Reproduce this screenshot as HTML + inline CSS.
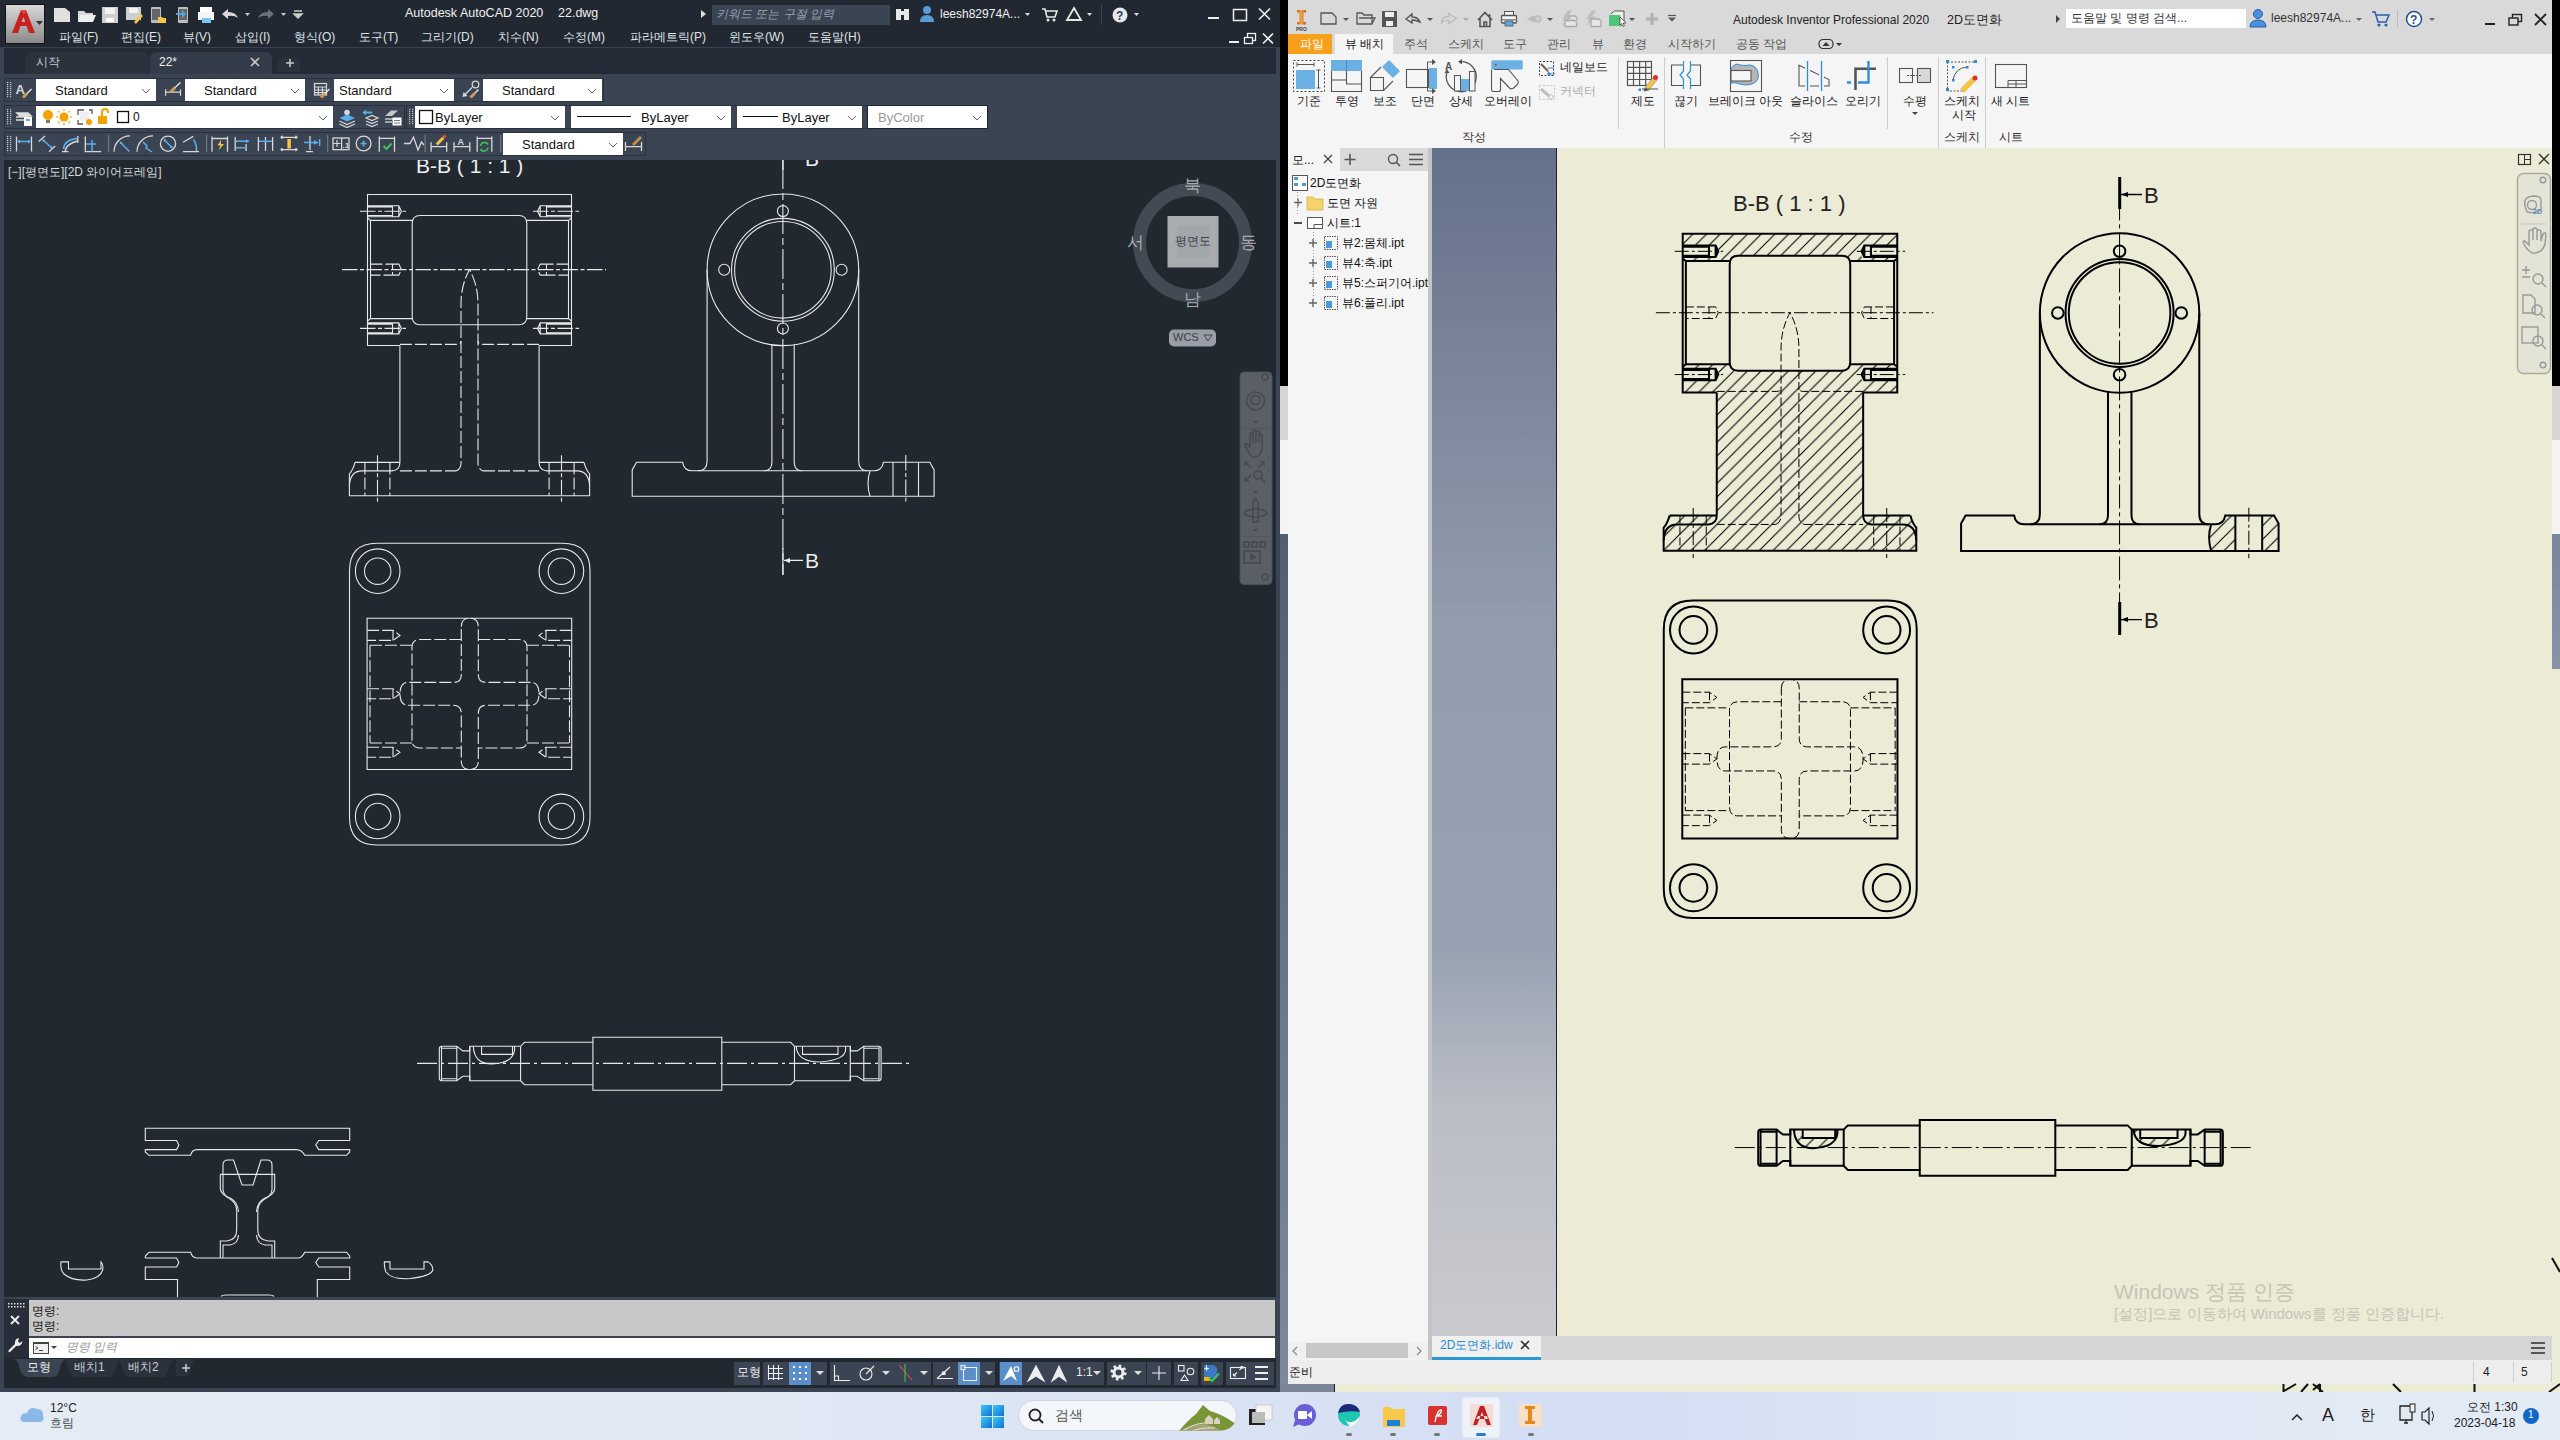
<!DOCTYPE html>
<html><head><meta charset="utf-8">
<style>
*{box-sizing:border-box;margin:0;padding:0}
html,body{width:2560px;height:1440px;overflow:hidden;background:#6f7b8f;font-family:"Liberation Sans",sans-serif}
.a{position:absolute}
#root{position:relative;width:2560px;height:1440px;overflow:hidden}
.t{position:absolute;white-space:nowrap;line-height:1}
svg.a{overflow:visible}
#acad .v,#acad .h,#acad .c,#acad .c2,#acad .c3{fill:none;stroke:#e8e8e8;stroke-width:1.1}
#acad .h{stroke-dasharray:12 3}
#acad .c{stroke-dasharray:30 4 7 4}
#acad .c2{stroke-dasharray:15.5 2.5 4 2.5}
#acad .c3{stroke-dasharray:20 4 3 4}
#inv .v,#inv .h,#inv .c,#inv .c2,#inv .c3{fill:none;stroke:#000;vector-effect:non-scaling-stroke}
#inv .v{stroke-width:2}
#inv .h{stroke-width:1;stroke-dasharray:8 3}
#inv .c{stroke-width:1;stroke-dasharray:24 4 4 4}
#inv .c2{stroke-width:1;stroke-dasharray:14 3 3 3}
#inv .c3{stroke-width:1;stroke-dasharray:20 4 3 4}
</style></head><body><div id="root">

<div class="a" style="left:0px;top:0px;width:1280px;height:1392px;background:#3b4453;"></div>
<div class="a" style="left:0px;top:0px;width:1280px;height:48px;background:#222832;"></div>
<div class="a" style="left:5px;top:4px;width:40px;height:40px;background:linear-gradient(#d8d8d8,#8a8a8a);border:1px solid #111"></div>
<svg class="a" style="left:9px;top:7px;" width="30" height="30" viewBox="0 0 30 30"><path d="M3,26 L12,3 H17 L26,26 H20 L14.5,10 L9,26 Z" fill="#c8201f"/><path d="M8,19 H19 L17.5,15 H9.5 Z" fill="#c8201f"/><path d="M12,3 H17 L15,8 Z" fill="#e84a3a"/></svg>
<svg class="a" style="left:36px;top:21px;" width="8" height="6" viewBox="0 0 8 6"><path d="M0,0 H7 L3.5,4 Z" fill="#333"/></svg>
<svg class="a" style="left:0px;top:0px;" width="320" height="48" viewBox="0 0 320 48">
    <path d="M54,8 H65 L70,12 V22 H54 Z" fill="#e0e0e0"/>
    <path d="M78,11 H84 L86,13 H93 V22 H78 Z" fill="#d8d8d8"/><path d="M80,15 H96 L93,22 H78 Z" fill="#efefef"/>
    <path d="M102,7 H118 V23 H102 Z" fill="#cfcfcf"/><rect x="105" y="8" width="10" height="6" fill="#f2f2f2"/><rect x="106" y="18" width="8" height="4" fill="#fff"/>
    <path d="M126,7 H141 V20 H126 Z" fill="#cfcfcf"/><rect x="129" y="8" width="9" height="5" fill="#f2f2f2"/><path d="M134,22 L141,14 L143,16 L136,24 Z" fill="#f2c447"/>
    <rect x="151" y="7" width="10" height="16" rx="1" fill="#bdbdbd"/><rect x="152" y="9" width="8" height="11" fill="#666"/><path d="M158,17 H162 L163,18 H166 V23 H158 Z" fill="#f2c447"/>
    <rect x="178" y="7" width="10" height="16" rx="1" fill="#bdbdbd"/><rect x="179" y="9" width="8" height="11" fill="#666"/><path d="M176,13 H182 V10 L186,14 L182,18 V15 H176 Z" fill="#4aa8e8"/>
    <rect x="200" y="7" width="12" height="6" fill="#fff"/><rect x="198" y="12" width="16" height="8" fill="#f5f5f5"/><rect x="202" y="18" width="9" height="5" fill="#7cc4f5"/>
    <path d="M222,14 L228,9 V12 Q236,12 238,18 Q234,15 228,16 V19 Z" fill="#d8d8d8"/>
    <path d="M245,13 H250 L247.5,16 Z" fill="#ccc"/>
    <path d="M274,14 L268,9 V12 Q260,12 258,18 Q262,15 268,16 V19 Z" fill="#6a7280"/>
    <path d="M281,13 H286 L283.5,16 Z" fill="#ccc"/>
    <path d="M294,11 H302 M294,14 H302 L298,18 Z" stroke="#ccc" stroke-width="1.5" fill="#ccc"/>
    </svg>
<div class="t" style="left:405px;top:7px;font-size:12.5px;color:#f0f0f0;">Autodesk AutoCAD 2020</div>
<div class="t" style="left:558px;top:7px;font-size:12.5px;color:#f0f0f0;">22.dwg</div>
<svg class="a" style="left:700px;top:9px;" width="8" height="10" viewBox="0 0 8 10"><path d="M1,1 L6,5 L1,9 Z" fill="#ddd"/></svg>
<div class="a" style="left:712px;top:5px;width:178px;height:20px;background:#3b4453;"></div>
<div class="t" style="left:716px;top:8px;font-size:12px;color:#98a0ac;font-style:italic">키워드 또는 구절 입력</div>
<svg class="a" style="left:0px;top:0px;" width="1280" height="48" viewBox="0 0 1280 48">
    <rect x="896" y="9" width="5" height="11" fill="#e8e8e8"/><rect x="904" y="9" width="5" height="11" fill="#e8e8e8"/><rect x="900" y="11" width="5" height="4" fill="#e8e8e8"/>
    <circle cx="927" cy="10" r="4" fill="#5b9bd5"/><path d="M920,22 Q920,15 927,15 Q934,15 934,22 Z" fill="#5b9bd5"/>
    <path d="M1025,13 H1030 L1027.5,16 Z" fill="#ddd"/>
    <path d="M1042,9 H1045 L1047,17 H1055 L1057,11 H1046" stroke="#e8e8e8" stroke-width="1.6" fill="none"/><circle cx="1048" cy="20" r="1.5" fill="#e8e8e8"/><circle cx="1054" cy="20" r="1.5" fill="#e8e8e8"/>
    <path d="M1074,8 L1067,20 H1081 Z" stroke="#e8e8e8" stroke-width="1.8" fill="none"/>
    <path d="M1087,13 H1092 L1089.5,16 Z" fill="#ddd"/>
    <rect x="1101" y="5" width="1" height="20" fill="#3e4653"/>
    <circle cx="1120" cy="15" r="7.5" fill="#e8e8e8"/><text x="1116" y="20" font-size="12" font-weight="bold" fill="#1f3b73" font-family="Liberation Sans">?</text>
    <path d="M1134,13 H1139 L1136.5,16 Z" fill="#ddd"/>
    <rect x="1208" y="17" width="11" height="2" fill="#eee"/>
    <rect x="1233.5" y="9.5" width="13" height="11" fill="none" stroke="#eee" stroke-width="1.5"/>
    <path d="M1259,8.5 L1270,19.5 M1270,8.5 L1259,19.5" stroke="#eee" stroke-width="1.6"/>
    <rect x="1229" y="41" width="10" height="2" fill="#eee"/>
    <rect x="1247.5" y="33.5" width="8" height="7" fill="none" stroke="#eee" stroke-width="1.3"/><rect x="1244.5" y="37.5" width="8" height="6" fill="#222832" stroke="#eee" stroke-width="1.3"/>
    <path d="M1263,33.5 L1273,43.5 M1273,33.5 L1263,43.5" stroke="#eee" stroke-width="1.6"/>
    </svg>
<div class="t" style="left:940px;top:8px;font-size:12px;color:#f0f0f0;">leesh82974A...</div>
<div class="t" style="left:59px;top:31px;font-size:12px;color:#dfe3e8;">파일(F)</div>
<div class="t" style="left:121px;top:31px;font-size:12px;color:#dfe3e8;">편집(E)</div>
<div class="t" style="left:183px;top:31px;font-size:12px;color:#dfe3e8;">뷰(V)</div>
<div class="t" style="left:235px;top:31px;font-size:12px;color:#dfe3e8;">삽입(I)</div>
<div class="t" style="left:294px;top:31px;font-size:12px;color:#dfe3e8;">형식(O)</div>
<div class="t" style="left:359px;top:31px;font-size:12px;color:#dfe3e8;">도구(T)</div>
<div class="t" style="left:421px;top:31px;font-size:12px;color:#dfe3e8;">그리기(D)</div>
<div class="t" style="left:498px;top:31px;font-size:12px;color:#dfe3e8;">치수(N)</div>
<div class="t" style="left:563px;top:31px;font-size:12px;color:#dfe3e8;">수정(M)</div>
<div class="t" style="left:630px;top:31px;font-size:12px;color:#dfe3e8;">파라메트릭(P)</div>
<div class="t" style="left:729px;top:31px;font-size:12px;color:#dfe3e8;">윈도우(W)</div>
<div class="t" style="left:808px;top:31px;font-size:12px;color:#dfe3e8;">도움말(H)</div>
<div class="a" style="left:0px;top:47px;width:1280px;height:1px;background:#39414e;"></div>
<div class="a" style="left:4px;top:48px;width:1272px;height:26px;background:#242b36;"></div>
<div class="a" style="left:25px;top:52px;width:124px;height:22px;background:#2b323e;border-radius:7px 7px 0 0"></div>
<div class="a" style="left:150px;top:52px;width:122px;height:22px;background:#343c49;border-radius:7px 7px 0 0"></div>
<div class="a" style="left:278px;top:57px;width:22px;height:15px;background:#2b323e;border-radius:6px 6px 0 0"></div>
<div class="t" style="left:36px;top:56px;font-size:12px;color:#c4cad2;">시작</div>
<div class="t" style="left:159px;top:56px;font-size:12px;color:#f0f0f0;">22*</div>
<svg class="a" style="left:250px;top:57px;" width="10" height="10" viewBox="0 0 10 10"><path d="M1,1 L9,9 M9,1 L1,9" stroke="#c8c8c8" stroke-width="1.6"/></svg>
<svg class="a" style="left:285px;top:58px;" width="10" height="10" viewBox="0 0 10 10"><path d="M5,1 V9 M1,5 H9" stroke="#c8c8c8" stroke-width="1.6"/></svg>
<div class="a" style="left:4px;top:78px;width:600px;height:24px;border:1px solid #2a313c;background:#3b4453"></div>
<svg class="a" style="left:7px;top:82px" width="6" height="16"><g fill="#c0c4ca"><rect x="0" y="0" width="1.2" height="1.2"/><rect x="0" y="2" width="1.2" height="1.2"/><rect x="0" y="4" width="1.2" height="1.2"/><rect x="0" y="6" width="1.2" height="1.2"/><rect x="0" y="8" width="1.2" height="1.2"/><rect x="0" y="10" width="1.2" height="1.2"/><rect x="0" y="12" width="1.2" height="1.2"/><rect x="0" y="14" width="1.2" height="1.2"/><rect x="3" y="0" width="1.2" height="1.2"/><rect x="3" y="2" width="1.2" height="1.2"/><rect x="3" y="4" width="1.2" height="1.2"/><rect x="3" y="6" width="1.2" height="1.2"/><rect x="3" y="8" width="1.2" height="1.2"/><rect x="3" y="10" width="1.2" height="1.2"/><rect x="3" y="12" width="1.2" height="1.2"/><rect x="3" y="14" width="1.2" height="1.2"/></g></svg>
<div class="a" style="left:36px;top:79px;width:120px;height:22px;background:#fff;"></div>
<div class="t" style="left:55px;top:84px;font-size:13px;color:#111;">Standard</div>
<svg class="a" style="left:141px;top:88px" width="10" height="6"><path d="M1,1 L5,5 L9,1" stroke="#6a6a6a" fill="none" stroke-width="1"/></svg>
<div class="a" style="left:185px;top:79px;width:120px;height:22px;background:#fff;"></div>
<div class="t" style="left:204px;top:84px;font-size:13px;color:#111;">Standard</div>
<svg class="a" style="left:290px;top:88px" width="10" height="6"><path d="M1,1 L5,5 L9,1" stroke="#6a6a6a" fill="none" stroke-width="1"/></svg>
<div class="a" style="left:334px;top:79px;width:120px;height:22px;background:#fff;"></div>
<div class="t" style="left:339px;top:84px;font-size:13px;color:#111;">Standard</div>
<svg class="a" style="left:439px;top:88px" width="10" height="6"><path d="M1,1 L5,5 L9,1" stroke="#6a6a6a" fill="none" stroke-width="1"/></svg>
<div class="a" style="left:483px;top:79px;width:119px;height:22px;background:#fff;"></div>
<div class="t" style="left:502px;top:84px;font-size:13px;color:#111;">Standard</div>
<svg class="a" style="left:587px;top:88px" width="10" height="6"><path d="M1,1 L5,5 L9,1" stroke="#6a6a6a" fill="none" stroke-width="1"/></svg>
<div class="a" style="left:4px;top:105px;width:401px;height:24px;border:1px solid #2a313c;background:#3b4453"></div>
<svg class="a" style="left:7px;top:109px" width="6" height="16"><g fill="#c0c4ca"><rect x="0" y="0" width="1.2" height="1.2"/><rect x="0" y="2" width="1.2" height="1.2"/><rect x="0" y="4" width="1.2" height="1.2"/><rect x="0" y="6" width="1.2" height="1.2"/><rect x="0" y="8" width="1.2" height="1.2"/><rect x="0" y="10" width="1.2" height="1.2"/><rect x="0" y="12" width="1.2" height="1.2"/><rect x="0" y="14" width="1.2" height="1.2"/><rect x="3" y="0" width="1.2" height="1.2"/><rect x="3" y="2" width="1.2" height="1.2"/><rect x="3" y="4" width="1.2" height="1.2"/><rect x="3" y="6" width="1.2" height="1.2"/><rect x="3" y="8" width="1.2" height="1.2"/><rect x="3" y="10" width="1.2" height="1.2"/><rect x="3" y="12" width="1.2" height="1.2"/><rect x="3" y="14" width="1.2" height="1.2"/></g></svg>
<div class="a" style="left:36px;top:106px;width:297px;height:22px;background:#fff;"></div>
<svg class="a" style="left:318px;top:115px" width="10" height="6"><path d="M1,1 L5,5 L9,1" stroke="#6a6a6a" fill="none" stroke-width="1"/></svg>
<div class="a" style="left:406px;top:105px;width:581px;height:24px;border:1px solid #2a313c;background:#3b4453"></div>
<svg class="a" style="left:409px;top:109px" width="6" height="16"><g fill="#c0c4ca"><rect x="0" y="0" width="1.2" height="1.2"/><rect x="0" y="2" width="1.2" height="1.2"/><rect x="0" y="4" width="1.2" height="1.2"/><rect x="0" y="6" width="1.2" height="1.2"/><rect x="0" y="8" width="1.2" height="1.2"/><rect x="0" y="10" width="1.2" height="1.2"/><rect x="0" y="12" width="1.2" height="1.2"/><rect x="0" y="14" width="1.2" height="1.2"/><rect x="3" y="0" width="1.2" height="1.2"/><rect x="3" y="2" width="1.2" height="1.2"/><rect x="3" y="4" width="1.2" height="1.2"/><rect x="3" y="6" width="1.2" height="1.2"/><rect x="3" y="8" width="1.2" height="1.2"/><rect x="3" y="10" width="1.2" height="1.2"/><rect x="3" y="12" width="1.2" height="1.2"/><rect x="3" y="14" width="1.2" height="1.2"/></g></svg>
<div class="a" style="left:415px;top:106px;width:150px;height:22px;background:#fff;"></div>
<div class="t" style="left:435px;top:111px;font-size:13px;color:#111;">ByLayer</div>
<svg class="a" style="left:550px;top:115px" width="10" height="6"><path d="M1,1 L5,5 L9,1" stroke="#6a6a6a" fill="none" stroke-width="1"/></svg>
<div class="a" style="left:571px;top:106px;width:160px;height:22px;background:#fff;"></div>
<div class="t" style="left:641px;top:111px;font-size:13px;color:#111;">ByLayer</div>
<svg class="a" style="left:716px;top:115px" width="10" height="6"><path d="M1,1 L5,5 L9,1" stroke="#6a6a6a" fill="none" stroke-width="1"/></svg>
<div class="a" style="left:737px;top:106px;width:125px;height:22px;background:#fff;"></div>
<div class="t" style="left:782px;top:111px;font-size:13px;color:#111;">ByLayer</div>
<svg class="a" style="left:847px;top:115px" width="10" height="6"><path d="M1,1 L5,5 L9,1" stroke="#6a6a6a" fill="none" stroke-width="1"/></svg>
<div class="a" style="left:867px;top:105px;width:121px;height:24px;background:#1f2630"></div>
<div class="a" style="left:868px;top:106px;width:119px;height:22px;background:#fff;"></div>
<div class="t" style="left:878px;top:111px;font-size:13px;color:#999;">ByColor</div>
<svg class="a" style="left:972px;top:115px" width="10" height="6"><path d="M1,1 L5,5 L9,1" stroke="#6a6a6a" fill="none" stroke-width="1"/></svg>
<div class="a" style="left:4px;top:132px;width:642px;height:24px;border:1px solid #2a313c;background:#3b4453"></div>
<svg class="a" style="left:7px;top:136px" width="6" height="16"><g fill="#c0c4ca"><rect x="0" y="0" width="1.2" height="1.2"/><rect x="0" y="2" width="1.2" height="1.2"/><rect x="0" y="4" width="1.2" height="1.2"/><rect x="0" y="6" width="1.2" height="1.2"/><rect x="0" y="8" width="1.2" height="1.2"/><rect x="0" y="10" width="1.2" height="1.2"/><rect x="0" y="12" width="1.2" height="1.2"/><rect x="0" y="14" width="1.2" height="1.2"/><rect x="3" y="0" width="1.2" height="1.2"/><rect x="3" y="2" width="1.2" height="1.2"/><rect x="3" y="4" width="1.2" height="1.2"/><rect x="3" y="6" width="1.2" height="1.2"/><rect x="3" y="8" width="1.2" height="1.2"/><rect x="3" y="10" width="1.2" height="1.2"/><rect x="3" y="12" width="1.2" height="1.2"/><rect x="3" y="14" width="1.2" height="1.2"/></g></svg>
<div class="a" style="left:503px;top:133px;width:120px;height:22px;background:#fff;"></div>
<div class="t" style="left:522px;top:138px;font-size:13px;color:#111;">Standard</div>
<svg class="a" style="left:608px;top:142px" width="10" height="6"><path d="M1,1 L5,5 L9,1" stroke="#6a6a6a" fill="none" stroke-width="1"/></svg>
<svg class="a" style="left:0px;top:0px;" width="700" height="160" viewBox="0 0 700 160">
    <text x="15.5" y="94" font-size="13" font-weight="bold" fill="#d8d8d8" font-family="Liberation Sans">A</text><path d="M23,97.5 L27,93.5" stroke="#d49a5a" stroke-width="3"/><path d="M27,93.5 L31.5,89" stroke="#e8e8e8" stroke-width="1.5"/>
    <path d="M165.6,89.3 V95.8 M180.5,89.3 V95.8 M165.6,92.2 H180.5" stroke="#d8d8d8" stroke-width="1.2" fill="none"/><path d="M170.5,92 L175,87.5" stroke="#d49a5a" stroke-width="3"/><path d="M175,87.5 L180.5,82.5" stroke="#e8e8e8" stroke-width="1.4"/>
    <g stroke="#d8d8d8" stroke-width="1.2" fill="none"><rect x="314.5" y="83.5" width="12" height="11.5"/><path d="M314.5,87 H326.5 M314.5,90 H326.5 M314.5,92.7 H326.5 M318.3,87 V95 M322.5,87 V95"/></g><path d="M321,97.5 L325,93.5" stroke="#d49a5a" stroke-width="3"/><path d="M325,93.5 L329.5,89" stroke="#e8e8e8" stroke-width="1.4"/>
    <path d="M463.5,96 L472,87.5" stroke="#d8d8d8" stroke-width="1.3"/><path d="M462.5,97 L463.5,92 L467.5,96 Z" fill="#d8d8d8"/><circle cx="475.5" cy="84.5" r="3.3" stroke="#d8d8d8" fill="none" stroke-width="1.3"/><path d="M470.5,97.5 L474.5,93.5" stroke="#d49a5a" stroke-width="3"/><path d="M474.5,93.5 L478.5,89.5" stroke="#e8e8e8" stroke-width="1.4"/>
    </svg>
<svg class="a" style="left:0px;top:0px;" width="700" height="160" viewBox="0 0 700 160">
    <path d="M17,113 H28 L31,116 H20 Z M16,117 H29 M16,120 H29" stroke="#ddd" stroke-width="1.6" fill="#ddd"/><rect x="24" y="117" width="8" height="9" fill="#fff"/><rect x="26" y="119" width="4" height="2" fill="#5aa9e6"/>
    <circle cx="48" cy="115" r="5" fill="#f5a100"/><rect x="46" y="120" width="4" height="3" fill="#777"/>
    <circle cx="64" cy="117" r="4.5" fill="#f5a100"/><g stroke="#f5a100" stroke-width="1.2"><path d="M64,109 V111 M64,123 V125 M56,117 H58 M70,117 H72 M58,111 L59.5,112.5 M70,111 L68.5,112.5 M58,123 L59.5,121.5 M70,123 L68.5,121.5"/></g>
    <path d="M78,115 V110 H84 M89,110 H92 V114 M78,120 V124 H83" stroke="#555" stroke-width="1.3" fill="none"/><rect x="80" y="112" width="9" height="9" fill="#eee"/><circle cx="89" cy="122" r="3" fill="#f5a100"/>
    <rect x="98" y="116" width="9" height="8" fill="#f5a100"/><path d="M102,116 V112 Q102,109 105,109 Q108,109 108,112 V113" stroke="#f5a100" stroke-width="2" fill="none"/>
    <rect x="117.5" y="111.5" width="11" height="11" fill="#fff" stroke="#111" stroke-width="1.3"/>
    </svg>
<div class="t" style="left:133px;top:111px;font-size:12px;color:#111;">0</div>
<svg class="a" style="left:0px;top:0px;" width="1000" height="160" viewBox="0 0 1000 160">
    <circle cx="347" cy="112.5" r="2.8" fill="#d8d8d8"/><path d="M339.5,118 L347,114.5 L355,118 L347,121.5 Z" fill="#5ab0ec"/><path d="M339.5,121 L347,124.5 L355,121 M339.5,124 L347,127.5 L355,124" stroke="#d8d8d8" stroke-width="1.3" fill="none"/>
    <path d="M362.5,112.5 L366,109.5 V111.5 H372 V113.5 H366 V115.5 Z" fill="#5ab0ec"/><path d="M366,118 L372,115.5 L378,118 L372,120.5 Z M366,121 L372,123.5 L378,121 M366,124 L372,126.5 L378,124" stroke="#d8d8d8" stroke-width="1.2" fill="none"/>
    <path d="M385,116 L391,110.5 H398 L392,116 Z" fill="#c8c8c8"/><path d="M385,119 H393 M385,122 H392" stroke="#c8c8c8" stroke-width="1.3"/><rect x="392.5" y="117.5" width="9" height="8" fill="#fff"/><path d="M394,120.5 H400 M394,123 H400" stroke="#777"/>
    <rect x="419.5" y="110.5" width="13" height="13" fill="#fff" stroke="#111" stroke-width="1.3"/>
    <path d="M577,116.5 H631" stroke="#111" stroke-width="1.2"/>
    <path d="M743,116.5 H778" stroke="#111" stroke-width="1.2"/>
    </svg>
<svg class="a" style="left:0px;top:0px;" width="700" height="160" viewBox="0 0 700 160">
    <g stroke="#d8d8d8" stroke-width="1.3" fill="none">
    <path d="M16.5,136.5 V151.5 M31.5,136.5 V151.5"/>
    <path d="M38.7,141.5 L45,136 M49,151.8 L55.2,146"/>
    <path d="M62,151.6 H68.5 M65,151.6 Q66,144 77.5,141 M77.8,136 V143"/>
    <path d="M85.3,136.4 V151.6 H101.2"/>
    <path d="M114,151.8 A16,16 0 0 1 130,135.8 M137,151.8 A16,16 0 0 1 153,135.8"/>
    <circle cx="168" cy="143.7" r="7.6"/>
    <path d="M183,142.2 L193.3,136.4 M183,151.6 H199"/>
    <path d="M212,136.4 V151.8 M227.5,136.4 V151.8 M212,138.5 H227.5"/>
    <path d="M235.2,137 V151 M246.1,144 V151"/>
    <path d="M258.4,137 V151 M265.5,137 V151 M272.6,137 V151"/>
    <path d="M281,137.3 H297 M281,149.6 H297 M282.5,135.8 L281,137.3 L282.5,138.8 M295.5,135.8 L297,137.3 L295.5,138.8 M282.5,148.1 L281,149.6 L282.5,151.1 M295.5,148.1 L297,149.6 L295.5,151.1"/>
    <path d="M310,136 V150 M306,151.6 H313"/>
    <rect x="333" y="138" width="16" height="11.7"/><path d="M341.6,138 V149.7"/>
    <circle cx="363.6" cy="143.5" r="7.4"/>
    <path d="M379.3,136.4 V151.8 M394.5,136.4 V151.8 M379.3,138.3 H394.5"/>
    <path d="M404,143.5 L410,143.5 L413.5,137 L418,150 L421.5,142 L424,145"/>
    <path d="M431.1,142.2 V151.8 M446.7,142.2 V151.8 M431.1,146.7 H446.7"/>
    <path d="M454,142.2 V151.8 M469.8,142.2 V151.8 M454,146.7 H469.8"/>
    <path d="M477.2,136.4 V151.8 M491.8,136.4 V151.8 M477.2,138.3 H491.8"/>
    <path d="M625.5,142 V151 M641.5,142 V151 M625.5,146.7 H641.5"/>
    </g>
    <text x="457.5" y="145" font-size="9" font-weight="bold" fill="#d8d8d8" font-family="Liberation Sans">A</text>
    <g stroke="#5ab0ec" stroke-width="1.5" fill="none">
    <path d="M18,141.5 H30"/><path d="M43.5,140.5 L51.5,147.5"/><path d="M63.5,149 Q64,140 77,138.5"/>
    <path d="M92.1,140 V151.6 M86,144.1 H96"/>
    <path d="M121,143 L129.5,151.5"/><path d="M143,142 L147,146 L146,148 L152,152"/><path d="M164,139.5 L172.5,148"/>
    <path d="M193.5,139.5 Q197,145 196.5,151"/>
    <path d="M236,141.3 H249 M236,147.7 H245"/><path d="M259,141.3 H272"/><path d="M304,142.4 H318 M319.6,139 V146"/>
    <path d="M363.6,140.5 V146.5 M360.6,143.5 H366.6"/>
    </g>
    <g fill="#5ab0ec"><path d="M17,141.5 L20,139.5 V143.5 Z M31,141.5 L28,139.5 V143.5 Z"/><circle cx="43.5" cy="140.5" r="1.3"/><circle cx="51.5" cy="147.5" r="1.3"/><path d="M249,141.3 L246,139.3 V143.3 Z M318,142.4 L314,140 V144.8 Z"/><circle cx="121" cy="143" r="1.3"/><circle cx="165" cy="140.5" r="1.3"/><circle cx="171.5" cy="147" r="1.3"/></g>
    <path d="M221,140 L217.5,145.5 H220.5 L218.5,150.5 L224,144 H221 Z" fill="#f2c447"/>
    <rect x="287.4" y="139" width="3.5" height="9.5" fill="#f2c447"/>
    <path d="M383.5,146 L386.5,149 L391.5,143.5" stroke="#3ec35c" stroke-width="2" fill="none"/>
    <path d="M436.7,144.5 L443.5,137.5" stroke="#f2c447" stroke-width="3"/><path d="M443,138 L445.5,135.5" stroke="#e84a3a" stroke-width="3"/>
    <path d="M480.5,146 A4,4 0 0 1 488,144.5 M488,147.5 A4,4 0 0 1 480.5,149" stroke="#3ec35c" stroke-width="1.6" fill="none"/>
    <path d="M633,145 L641,137" stroke="#c98f4e" stroke-width="2.6"/>
    <path d="M333.5,143.5 H340.5 M337,140 V147" stroke="#d8d8d8" stroke-width="1.2"/><text x="342.5" y="148" font-size="8" font-weight="bold" fill="#d8d8d8" font-family="Liberation Sans">.1</text>
    <g fill="#6c7480"><rect x="108" y="135" width="1.3" height="17"/><rect x="206" y="135" width="1.3" height="17"/><rect x="327" y="135" width="1.3" height="17"/><rect x="424.5" y="135" width="1.3" height="17"/><rect x="500" y="135" width="1.3" height="17"/></g>
    </svg>
<div class="a" style="left:4px;top:160px;width:1272px;height:1137px;background:#212830;"></div>
<div class="t" style="left:8px;top:166px;font-size:12px;color:#d4d8de;">[−][평면도][2D 와이어프레임]</div>
<svg id="acad" class="a" style="left:0;top:0;overflow:hidden" width="1276" height="1297" viewBox="0 0 1276 1297"><g>
<clipPath id="clipA"><rect x="4" y="160" width="1272" height="1137"/></clipPath><g clip-path="url(#clipA)">
<path class="v" d="M399.9,345.5 H367.5 V194.5 H571.5 V345.5 H539.1"/>
<path class="v" d="M399.9,345.5 V462.4 M539.1,345.5 V462.4"/>
<path class="v" d="M355,462.4 H399.9 M584,462.4 H539.1"/>
<path class="v" d="M355,462.4 Q353,470 349.4,474 V495.8 H589.6 V474 Q586,470 584,462.4"/>
<path class="v" d="M349.4,486 Q350,471 362,470.9 H392 Q399.9,470 399.9,462.4"/>
<path class="v" d="M589.6,486 Q589,471 577,470.9 H547 Q539.1,470 539.1,462.4"/>
<path class="v" d="M367.5,218 L370.5,220.4 H412.2 M370.5,220.4 V318.6 M367.5,321 L370.5,318.6 H412.2"/>
<path class="v" d="M571.5,218 L568.5,220.4 H526.8 M568.5,220.4 V318.6 M571.5,321 L568.5,318.6 H526.8"/>
<path class="v" d="M420.2,215.5 H518.8 Q526.8,215.5 526.8,223.5 V316.7 Q526.8,324.7 518.8,324.7 H420.2 Q412.2,324.7 412.2,316.7 V223.5 Q412.2,215.5 420.2,215.5 Z"/>
<path class="v" d="M367.5,205.7 H392.5 V216.7 H367.5 M367.5,206.89999999999998 H392.5 M367.5,215.5 H392.5 M392.5,205.7 H398.8 L401.4,211.2 L398.8,216.7 H392.5 M398.8,205.7 V216.7"/>
<path class="v" d="M571.5,205.7 H546.5 V216.7 H571.5 M571.5,206.89999999999998 H546.5 M571.5,215.5 H546.5 M546.5,205.7 H540.2 L537.6,211.2 L540.2,216.7 H546.5 M540.2,205.7 V216.7"/>
<path class="c2" d="M360,211.2 H406 M533,211.2 H579"/>
<path class="v" d="M367.5,322.9 H392.5 V333.9 H367.5 M367.5,324.09999999999997 H392.5 M367.5,332.7 H392.5 M392.5,322.9 H398.8 L401.4,328.4 L398.8,333.9 H392.5 M398.8,322.9 V333.9"/>
<path class="v" d="M571.5,322.9 H546.5 V333.9 H571.5 M571.5,324.09999999999997 H546.5 M571.5,332.7 H546.5 M546.5,322.9 H540.2 L537.6,328.4 L540.2,333.9 H546.5 M540.2,322.9 V333.9"/>
<path class="c2" d="M360,328.4 H406 M533,328.4 H579"/>
<path class="h" d="M370.5,264.1 H392.5 V275.1 H370.5 M392.5,264.1 H398.8 L401.4,269.6 L398.8,275.1 H392.5"/>
<path class="h" d="M568.5,264.1 H546.5 V275.1 H568.5 M546.5,264.1 H540.2 L537.6,269.6 L540.2,275.1 H546.5"/>
<path class="c2" d="M342,269.6 H606"/>
<path class="h" d="M456,470.9 Q461,469 461,463 V304 Q461,285 469.5,269.6 Q478,285 478,304 V463 Q478,469 483,470.9"/>
<path class="h" d="M399.9,344.4 H457 Q461,344.4 461,341 M539.1,344.4 H482 Q478,344.4 478,341"/>
<path class="h" d="M399.9,470.9 H456 M483,470.9 H539.1"/>
<path class="h" d="M364.9,462.4 V495.8"/>
<path class="h" d="M389.9,462.4 V495.8"/>
<path class="h" d="M549.1,462.4 V495.8"/>
<path class="h" d="M574.1,462.4 V495.8"/>
<path class="c2" d="M377.5,455.3 V502.9 M561.5,455.3 V502.9"/>
<circle class="v" cx="782.9" cy="269.8" r="75.8"/>
<circle class="v" cx="782.9" cy="269.8" r="51.4"/>
<circle class="v" cx="782.9" cy="269.8" r="48.3"/>
<circle class="v" cx="782.9" cy="211.10000000000002" r="5.5"/>
<circle class="v" cx="782.9" cy="328.5" r="5.5"/>
<circle class="v" cx="724.1999999999999" cy="269.8" r="5.5"/>
<circle class="v" cx="841.6" cy="269.8" r="5.5"/>
<path class="v" d="M707.1,269.8 V461 Q707.1,470.8 698,470.8 M858.7,269.8 V461 Q858.7,470.8 867.8,470.8"/>
<path class="v" d="M771.9,344.8 V462 Q771.9,470.8 764,470.8 M794.2,344.8 V462 Q794.2,470.8 802,470.8"/>
<path class="v" d="M632.2,496.2 V470 L636.5,462.3 H682.6 Q684,470.8 692,470.8 H874 Q882,470.8 883.4,462.3 H929.8 L934.1,470 V496.2 Z"/>
<path class="v" d="M893,462.3 V496.2 M918.5,462.3 V496.2 M870,470.8 Q866,483 870,496.2"/>
<path class="c2" d="M905.8,455 V503"/>
<path class="c" d="M782.9,159 V575"/>
<path class="v" d="M377.0,543.3 H562.5 Q590,543.3 590,570.8 V817.5 Q590,845 562.5,845 H377.0 Q349.5,845 349.5,817.5 V570.8 Q349.5,543.3 377.0,543.3 Z"/>
<circle class="v" cx="377.7" cy="571.2" r="22.3"/>
<circle class="v" cx="377.7" cy="571.2" r="13.2"/>
<circle class="v" cx="377.7" cy="816.4" r="22.3"/>
<circle class="v" cx="377.7" cy="816.4" r="13.2"/>
<circle class="v" cx="561.4" cy="571.2" r="22.3"/>
<circle class="v" cx="561.4" cy="571.2" r="13.2"/>
<circle class="v" cx="561.4" cy="816.4" r="22.3"/>
<circle class="v" cx="561.4" cy="816.4" r="13.2"/>
<path class="v" d="M367.1,618.2 H571.7 V769.5 H367.1 Z"/>
<path class="h" d="M461.3,639.5 H420 Q412,639.5 412,647.5 V740 Q412,748 420,748 H461.3 M478.3,639.5 H519 Q527,639.5 527,647.5 V740 Q527,748 519,748 H478.3"/>
<path class="h" d="M461.3,626.7 Q461.3,618.2 469.8,618.2 Q478.3,618.2 478.3,626.7 V674.4 Q478.3,682.4 486.3,682.4 H531 Q539,682.4 539,693.8 Q539,705.3 531,705.3 H486.3 Q478.3,705.3 478.3,713.3 V761 Q478.3,769.5 469.8,769.5 Q461.3,769.5 461.3,761 V713.3 Q461.3,705.3 453.3,705.3 H408 Q400,705.3 400,693.8 Q400,682.4 408,682.4 H453.3 Q461.3,682.4 461.3,674.4 Z"/>
<path class="h" d="M370,645.3 H412 M370,743 H412 M370,645.3 V743 M527,645.3 H569.5 M527,743 H569.5 M569.5,645.3 V743"/>
<path class="h" d="M367.1,630.4 H393 L400,635.4 L393,640.4 H367.1 M393,630.4 V640.4"/>
<path class="h" d="M571.7,630.4 H546 L539,635.4 L546,640.4 H571.7 M546,630.4 V640.4"/>
<path class="h" d="M367.1,688.8 H393 L400,693.8 L393,698.8 H367.1 M393,688.8 V698.8"/>
<path class="h" d="M571.7,688.8 H546 L539,693.8 L546,698.8 H571.7 M546,688.8 V698.8"/>
<path class="h" d="M367.1,747.3 H393 L400,752.3 L393,757.3 H367.1 M393,747.3 V757.3"/>
<path class="h" d="M571.7,747.3 H546 L539,752.3 L546,757.3 H571.7 M546,747.3 V757.3"/>
<path class="v" d="M439.3,1049 Q439.3,1046.3 442,1046.3 H456.8 L462.8,1050.9 H469.8 V1046.3 H520.6 L524.5,1042.3 H592.9 V1037.3 H721.8 V1042.3 H790.6 L794.5,1046.3 H850.3 V1050.9 H857.2 L863.8,1046.3 H878.4 Q881.1,1046.3 881.1,1049 V1078 Q881.1,1080.8 878.4,1080.8 H863.8 L857.2,1076.2 H850.3 V1080.8 H794.5 L790.6,1084.7 H721.8 V1090.3 H592.9 V1084.7 H524.5 L520.6,1080.8 H469.8 V1076.2 H462.8 L456.8,1080.8 H442 Q439.3,1080.8 439.3,1078 Z"/>
<path class="v" d="M456.8,1046.3 V1080.8 M469.8,1046.3 V1080.8 M520.6,1046.3 V1080.8 M592.9,1042.3 V1084.7 M721.8,1042.3 V1084.7 M794.5,1046.3 V1080.8 M850.3,1046.3 V1080.8 M863.8,1046.3 V1080.8"/>
<path class="v" d="M441.5,1046.3 V1080.8 M879,1046.3 V1080.8 M442,1048.3 H456.8 M442,1078.8 H456.8 M863.8,1048.3 H878.4 M863.8,1078.8 H878.4"/>
<path class="v" d="M473.3,1046.3 Q474,1064 492,1064 Q513,1063 514.6,1050 V1046.3 M481.6,1046.3 V1054.4 H512.5 V1046.3"/>
<path class="v" d="M796.2,1046.3 Q797,1062 820,1062 Q845,1060 845.6,1050 V1046.3 M802.5,1046.3 V1054.4 H838 V1046.3"/>
<path class="c3" d="M417,1063.4 H910"/>

    <path class="v" d="M145.3,1128.3 H349.7 V1140.5 H318.8 L315.8,1145 L318.8,1149.6 H349.7 V1152 L346.5,1155.3 H304.7 Q302,1149.6 296,1149.6 H196.9 Q192,1149.6 190.6,1155.3 H149 L145.3,1152 V1149.6 H176.6 L178.9,1145 L176.6,1140.5 H145.3 Z"/>
    <path class="v" d="M223,1174.4 V1165 Q223,1160 228,1160 H233.5 L242,1185 H253 L261,1160 H267 Q272,1160 272,1165 V1174.4"/>
    <path class="v" d="M220.3,1174.4 H274.7 V1188 Q274.7,1193 268,1197 Q258,1202 257.8,1210 V1230 Q257.8,1240 268,1241 H274.7 V1257.7 M220.3,1174.4 V1188 Q220.3,1193 227,1197 Q236.7,1202 236.7,1210 V1230 Q236.7,1240 227,1241 H220.3 V1257.7"/>
    <path class="v" d="M223,1174.4 V1190 Q224,1196 230,1198 Q238,1202 238.5,1212 M272,1174.4 V1190 Q271,1196 265,1198 Q257,1202 256.5,1212"/>
    <path class="v" d="M223,1257.7 V1245 H230 Q238,1244 238.5,1235 M272,1257.7 V1245 H265 Q257,1244 256.5,1235"/>
    <path class="v" d="M145.3,1256 L149,1252.2 H190.6 Q192,1258 197,1258 H298 Q302,1258 304.7,1252.2 H346.5 L349.7,1256 V1258 H318.8 L315.8,1262.5 L318.8,1267 H349.7 V1279.5 H317.3 V1297 M145.3,1258 H176.6 L178.9,1262.5 L176.6,1267 H145.3 V1279.5 H177.5 V1297 M145.3,1256 V1258 M220.3,1258 H274.7"/>
    <path class="v" d="M221,1296.5 Q222,1295 226,1295 H269 Q273,1295 274,1296.5"/>
    <path class="v" d="M61,1261.9 H68.5 V1269 H101 V1261.9 Q103,1264 103,1268 Q102,1278 87,1280 Q72,1281 64,1274 Q60,1270 61,1261.9 Z"/>
    <path class="v" d="M384.4,1261.9 H390 V1269 H424 V1261.9 H428 Q433,1265 432.8,1270 Q431,1276 410,1278.5 Q392,1280 386,1272 Q384,1268 384.4,1261.9 Z"/>
    
<text x="416" y="173" font-size="21" fill="#eee" font-family="Liberation Sans">B-B ( 1 : 1 )</text>
<text x="805" y="166" font-size="21" fill="#eee" font-family="Liberation Sans">B</text>
<path d="M782.9,150 V170 M782.9,548 V575 M784,560.4 H803" stroke="#eee" stroke-width="1.2" fill="none"/><path d="M784,560.4 L790,558 V563 Z" fill="#eee"/>
<text x="805" y="568" font-size="21" fill="#eee" font-family="Liberation Sans">B</text>
</g></g></svg>
<svg class="a" style="left:0px;top:0px;" width="1280" height="600" viewBox="0 0 1280 600">
    <circle cx="1192.6" cy="242.6" r="53" fill="none" stroke="#444a53" stroke-width="13"/>
    <rect x="1167.5" y="216" width="51" height="51.5" fill="#a9abae"/>
    <rect x="1177" y="226" width="32" height="32" fill="#a1a6ab"/>
    <rect x="1169" y="329.5" width="47" height="17" rx="5" fill="#989da8"/>
    <path d="M1204,335 H1212 L1208,341 Z" fill="none" stroke="#444" stroke-width="1"/>
    <rect x="1240" y="372" width="32" height="212.5" rx="4" fill="#5a5e65" stroke="#4a4f57"/><path d="M1243,428.5 H1269 M1243,536.5 H1269" stroke="#52565d"/>
    <g fill="none" stroke="#464a51" stroke-width="1.6">
    <circle cx="1265" cy="377" r="3"/><circle cx="1255.5" cy="401" r="9"/><circle cx="1255.5" cy="400" r="4.5"/>
    <path d="M1249,453 L1245,446 Q1244,443 1247,444 L1250,447 V434 Q1251,432 1253,434 V443 V431 Q1254,429 1256,431 V443 V432 Q1257,430 1259,432 V443 V435 Q1260,433 1262,435 V448 Q1261,456 1255,457 Q1251,457 1249,453 Z"/>
    <path d="M1245,462 L1251,468 M1245,462 V466 M1245,462 H1249 M1264,462 L1258,468 M1264,462 V466 M1264,462 H1260 M1245,481 L1251,475 M1245,481 V477 M1245,481 H1249"/><circle cx="1258" cy="475" r="4"/><path d="M1261,478 L1265,482"/>
    <ellipse cx="1255.5" cy="513" rx="11" ry="4"/><path d="M1253,502 L1255.5,499 L1258,502 M1253,502 V522 H1258 V502"/>
    <rect x="1244" y="542" width="5" height="5"/><rect x="1252" y="542" width="5" height="5"/><rect x="1260" y="542" width="5" height="5"/><rect x="1244" y="551" width="16" height="12"/>
    <circle cx="1265" cy="577" r="3"/>
    </g>
    <g fill="#464a51"><path d="M1253,421 H1258 L1255.5,424 Z"/><path d="M1253,491 H1258 L1255.5,494 Z"/><path d="M1253,529 H1258 L1255.5,532 Z"/><path d="M1250,553 L1257,557 L1250,561 Z"/></g>
    </svg>
<div class="t" style="left:1184px;top:177px;font-size:17px;color:#a8acb2;">북</div>
<div class="t" style="left:1127px;top:234px;font-size:17px;color:#a8acb2;">서</div>
<div class="t" style="left:1240px;top:234px;font-size:17px;color:#a8acb2;">동</div>
<div class="t" style="left:1184px;top:291px;font-size:17px;color:#a8acb2;">남</div>
<div class="t" style="left:1175px;top:236px;font-size:11.5px;color:#3a3d42;">평면도</div>
<div class="t" style="left:1173px;top:332px;font-size:11px;color:#3a3d42;">WCS</div>
<div class="a" style="left:4px;top:1297px;width:1272px;height:3px;background:#3b4453;"></div>
<div class="a" style="left:4px;top:1299px;width:25px;height:59px;background:#272e39;"></div>
<div class="a" style="left:29px;top:1300px;width:1246px;height:36px;background:#c8c8c8;"></div>
<div class="a" style="left:29px;top:1336px;width:1246px;height:2px;background:#3b4453;"></div>
<div class="a" style="left:29px;top:1338px;width:1246px;height:20px;background:#ffffff;"></div>
<div class="t" style="left:32px;top:1305px;font-size:12px;color:#111;">명령:</div>
<div class="t" style="left:32px;top:1320px;font-size:12px;color:#111;">명령:</div>
<svg class="a" style="left:0px;top:0px;" width="1280" height="1400" viewBox="0 0 1280 1400">
    <g fill="#e0e0e0"><rect x="8" y="1303" width="1.5" height="1.5"/><rect x="11" y="1303" width="1.5" height="1.5"/><rect x="14" y="1303" width="1.5" height="1.5"/><rect x="17" y="1303" width="1.5" height="1.5"/><rect x="20" y="1303" width="1.5" height="1.5"/><rect x="23" y="1303" width="1.5" height="1.5"/>
    <rect x="8" y="1306" width="1.5" height="1.5"/><rect x="11" y="1306" width="1.5" height="1.5"/><rect x="14" y="1306" width="1.5" height="1.5"/><rect x="17" y="1306" width="1.5" height="1.5"/><rect x="20" y="1306" width="1.5" height="1.5"/><rect x="23" y="1306" width="1.5" height="1.5"/></g>
    <path d="M11,1316 L19,1324 M19,1316 L11,1324" stroke="#eee" stroke-width="1.8"/>
    <path d="M9.5,1351 L17,1343.5" stroke="#eee" stroke-width="2.2" stroke-linecap="round"/><path d="M15,1345 Q14,1339 19,1338 L18,1341.5 L20,1343 L22.5,1341 Q22,1346 17,1346 Z" fill="#eee"/>
    <rect x="33.5" y="1342.5" width="15" height="11" fill="#f0f0f0" stroke="#444"/><rect x="33.5" y="1342.5" width="15" height="1.5" fill="#444"/><path d="M35.5,1346.5 L38,1348 L35.5,1349.5 M39,1350.5 H43" stroke="#444" fill="none"/>
    <path d="M51,1346 H57 L54,1349 Z" fill="#444"/>
    </svg>
<div class="t" style="left:66px;top:1341px;font-size:12px;color:#999;font-style:italic">명령 입력</div>
<div class="a" style="left:4px;top:1358px;width:1272px;height:30px;background:#212830;"></div>
<svg class="a" style="left:0px;top:0px;" width="1280" height="1400" viewBox="0 0 1280 1400"><path d="M12,1359 Q18,1359 19,1366 Q21,1377 28,1377 H53 Q58,1377 60,1368 Q62,1359 68,1359 Z" fill="#3b4453"/><path d="M63,1359 Q67,1360 68,1368 Q70,1377 76,1377 H110 Q114,1377 116,1368 Q118,1360 122,1359 Z" fill="#2b323e"/><path d="M117,1359 Q121,1360 122,1368 Q124,1377 130,1377 H163 Q167,1377 169,1368 Q171,1360 175,1359 Z" fill="#2b323e"/><path d="M176,1359 H196 Q192,1361 191,1368 Q190,1376 186,1376 H176 Z" fill="#2b323e"/></svg>
<div class="t" style="left:27px;top:1361px;font-size:12px;color:#f0f0f0;">모형</div>
<div class="t" style="left:74px;top:1361px;font-size:12px;color:#c8ccd2;">배치1</div>
<div class="t" style="left:128px;top:1361px;font-size:12px;color:#c8ccd2;">배치2</div>
<svg class="a" style="left:181px;top:1363px;" width="10" height="10" viewBox="0 0 10 10"><path d="M5,1 V9 M1,5 H9" stroke="#c8c8c8" stroke-width="1.6"/></svg>
<div class="a" style="left:734px;top:1362px;width:26px;height:23px;background:#3b4453;"></div>
<div class="a" style="left:763px;top:1362px;width:64px;height:23px;background:#3b4453;"></div>
<div class="a" style="left:830px;top:1362px;width:101px;height:23px;background:#3b4453;"></div>
<div class="a" style="left:933px;top:1362px;width:62px;height:23px;background:#3b4453;"></div>
<div class="a" style="left:999px;top:1362px;width:105px;height:23px;background:#3b4453;"></div>
<div class="a" style="left:1107px;top:1362px;width:39px;height:23px;background:#3b4453;"></div>
<div class="a" style="left:1147px;top:1362px;width:24px;height:23px;background:#3b4453;"></div>
<div class="a" style="left:1174px;top:1362px;width:24px;height:23px;background:#3b4453;"></div>
<div class="a" style="left:1201px;top:1362px;width:22px;height:23px;background:#3b4453;"></div>
<div class="a" style="left:1226px;top:1362px;width:48px;height:23px;background:#3b4453;"></div>
<div class="a" style="left:789px;top:1362px;width:22px;height:23px;background:#5b8fc9;"></div>
<div class="a" style="left:958px;top:1362px;width:22px;height:23px;background:#5b8fc9;"></div>
<div class="a" style="left:1000px;top:1362px;width:22px;height:23px;background:#5b8fc9;"></div>
<div class="t" style="left:737px;top:1366px;font-size:12px;color:#f0f0f0;">모형</div>
<svg class="a" style="left:0px;top:0px;" width="1280" height="1400" viewBox="0 0 1280 1400"><g stroke="#eee" stroke-width="1.1" fill="none">
    <path d="M768.5,1365 V1380 M773.5,1365 V1380 M778.5,1365 V1380 M768,1368.5 H783 M768,1373.5 H783 M768,1378.5 H783"/>
    <path d="M834.5,1365 V1380.5 H850 M834.5,1376 H838.5 V1380.5"/><circle cx="866" cy="1374" r="6"/><path d="M866,1374 L874,1366"/>
    <path d="M899,1365 L912,1380" stroke="#e05050"/><path d="M905,1364 V1382" stroke="#3ec35c"/>
    <path d="M937,1378.5 H953 M937,1378.5 L950,1367"/><rect x="942.5" y="1372" width="2.5" height="2.5" fill="#eee"/><path d="M963.5,1367.5 H976.5 V1380.5 H963.5 V1370"/><rect x="961" y="1365.5" width="4" height="4"/>
    <path d="M1003,1381 L1011,1366 L1017,1381 L1011,1376 Z" fill="#fff" stroke="none"/><circle cx="1016.5" cy="1369" r="2.3" stroke="#fff"/><path d="M1028,1381 L1036,1366 L1044,1381 L1036,1376 Z" fill="#eee"/><path d="M1052,1381 L1059,1366 L1066,1381 L1059,1376 Z" fill="#eee"/>
    <circle cx="1118.5" cy="1372.5" r="4.5" stroke-width="3"/><circle cx="1118.5" cy="1372.5" r="6.8" stroke-width="2.6" stroke-dasharray="2.6 2.74"/><path d="M1152,1373 H1166 M1159,1366 V1380"/>
    <rect x="1178.5" y="1365.5" width="5.5" height="5.5"/><circle cx="1190.5" cy="1371.5" r="3.3"/><path d="M1181,1380.5 L1184.5,1375 L1188,1380.5 Z"/>
    <rect x="1230.5" y="1367.5" width="15" height="11"/><path d="M1233.5,1376 L1237,1372.5 M1239.5,1370 L1243,1366.5 M1233.5,1376 V1373.5 M1233.5,1376 H1236 M1243,1366.5 H1240.5 M1243,1366.5 V1369"/><path d="M1255,1367 H1268 M1255,1373 H1268 M1255,1379 H1268" stroke-width="1.8"/>
    </g>
    <g fill="#ddd"><path d="M816,1371 H824 L820,1375 Z"/><path d="M882,1371 H890 L886,1375 Z"/><path d="M920,1371 H928 L924,1375 Z"/><path d="M985,1371 H993 L989,1375 Z"/><path d="M1093,1371 H1101 L1097,1375 Z"/><path d="M1134,1371 H1142 L1138,1375 Z"/></g>
    <g fill="#fff"><rect x="793" y="1366" width="2" height="2"/><rect x="799" y="1366" width="2" height="2"/><rect x="805" y="1366" width="2" height="2"/><rect x="793" y="1372" width="2" height="2"/><rect x="799" y="1372" width="2" height="2"/><rect x="805" y="1372" width="2" height="2"/><rect x="793" y="1378" width="2" height="2"/><rect x="799" y="1378" width="2" height="2"/><rect x="805" y="1378" width="2" height="2"/></g>
    <path d="M1204,1365 H1214 L1217,1368 V1378 H1204 Z" fill="#3a78c8"/><path d="M1204,1368.5 H1209 M1206.5,1365 V1371" stroke="#fff" stroke-width="0.8"/><circle cx="1206.5" cy="1368.5" r="1.2" fill="#fff"/><rect x="1204" y="1377" width="6" height="4" fill="#f5b400"/><path d="M1209,1378 L1212,1381 L1219,1373.5" stroke="#3ec35c" stroke-width="2" fill="none"/>
    </svg>
<div class="t" style="left:1076px;top:1366px;font-size:12px;color:#eee;">1:1</div>
<div class="a" style="left:0px;top:1388px;width:1280px;height:4px;background:#3b4453;"></div>
<div class="a" style="left:1276px;top:48px;width:4px;height:1344px;background:#3b4453;"></div>
<div class="a" style="left:0px;top:48px;width:4px;height:1344px;background:#3b4453;"></div>
<div class="a" style="left:1280px;top:0px;width:8px;height:386px;background:#000;"></div>
<div class="a" style="left:1280px;top:386px;width:8px;height:54px;background:#d5d5d5;"></div>
<div class="a" style="left:1280px;top:440px;width:8px;height:94px;background:#f3f3f3;"></div>
<div class="a" style="left:1280px;top:534px;width:8px;height:850px;background:linear-gradient(#535e73,#6e7a8e 60%,#7d889a);"></div>
<div class="a" style="left:2552px;top:0px;width:8px;height:386px;background:#000;"></div>
<div class="a" style="left:2552px;top:386px;width:8px;height:54px;background:#d5d5d5;"></div>
<div class="a" style="left:2552px;top:440px;width:8px;height:94px;background:#f3f3f3;"></div>
<div class="a" style="left:2552px;top:534px;width:8px;height:135px;background:linear-gradient(#7a869c,#8893a8);"></div>
<div class="a" style="left:2552px;top:669px;width:8px;height:723px;background:#ecebd6;"></div>
<div class="a" style="left:1288px;top:0px;width:1264px;height:54px;background:#d9d9d9;"></div>
<div class="a" style="left:1288px;top:54px;width:1264px;height:94px;background:#f5f5f5;"></div>
<svg class="a" style="left:0px;top:0px;" width="2560" height="40" viewBox="0 0 2560 40">
    <defs><linearGradient id="ig" x1="0" x2="1"><stop offset="0" stop-color="#c86a14"/><stop offset="0.5" stop-color="#f0a040"/><stop offset="1" stop-color="#b85a10"/></linearGradient></defs><path d="M1297,10 H1306 V12.5 H1303.5 V22 H1306 V24.5 H1297 V22 H1299.5 V12.5 H1297 Z" fill="url(#ig)"/>
    <text x="1296" y="31" font-size="5" font-weight="bold" fill="#444" font-family="Liberation Sans">PRO</text>
    <g fill="none" stroke="#555" stroke-width="1.3">
    <path d="M1321,13 H1332 L1336,17 V24 H1321 Z"/>
    <path d="M1357,13 H1362 L1364,15 H1372 V24 H1357 Z M1359,18 H1375 L1372,24"/>
    <path d="M1441.5,23 Q1441.5,16.5 1448.5,16.5 V13.5 L1456.5,18.5 L1448.5,23.5 V20.5 Q1444,20 1441.5,23 Z" stroke="#bbb"/>
    <path d="M1478,20 L1485,12.5 L1492,20 M1489.5,14 V17 M1480,18 V26.5 H1490 V18 M1484,26.5 V22 H1486.5 V26.5" stroke-width="1.6"/>
    <path d="M1528,19 L1534,16 V22 Z" stroke="#bbb" fill="#bbb"/><circle cx="1538" cy="19" r="3" stroke="#bbb" fill="#ccc"/>
    <path d="M1568,10.5 H1572 L1568,16.5 H1572 L1562,26.5 L1565.5,19.5 H1562 Z" fill="#bdbdbd" stroke="none"/><path d="M1565,20.5 H1575 L1576.5,22 V26.5 H1565 Z M1568,16 H1575 L1577,18 V20.5" stroke="#aaa" fill="#e6e6e6"/><path d="M1592,10.5 H1596 L1592,16.5 H1596 L1586,26.5 L1589.5,19.5 H1586 Z" fill="#bdbdbd" stroke="none"/><path d="M1591,19 H1599 L1601,21 V26.5 H1591 Z" stroke="#aaa" fill="#e6e6e6"/>
    <path d="M1652,13 V25 M1646,19 H1658" stroke="#b0b0b0" stroke-width="3"/>
    </g>
    <path d="M1382,11 H1397 V27 H1382 Z" fill="#555"/><rect x="1385" y="12" width="9" height="5" fill="#eee"/><rect x="1386" y="21" width="7" height="5" fill="#eee"/>
    <path d="M1406,19 L1412,14 V17 Q1418,17 1420,22 Q1416,20 1412,20 V23 Z" fill="none" stroke="#555" stroke-width="1.4"/>
    <rect x="1504.5" y="11.5" width="9" height="4" fill="#f2f2f2" stroke="#555"/><rect x="1501.5" y="15.5" width="15" height="7.5" rx="1" fill="#f2f2f2" stroke="#555" stroke-width="1.3"/><rect x="1501.5" y="19" width="15" height="1.5" fill="#888"/><rect x="1505" y="21" width="8" height="5" fill="#5aa9e6" stroke="#555" stroke-width="0.8"/>
    <path d="M1611,14 L1614.5,11 H1624 V23.5 L1620.5,26" fill="#f0f0f0" stroke="#555"/><rect x="1609" y="15" width="11.5" height="11" fill="#52c47a"/><path d="M1620,17 L1626,23 L1623,23 L1624.5,26 L1623,26.5 L1621.5,23.5 L1620,25 Z" fill="#fff" stroke="#222" stroke-width="0.6"/>
    <path d="M1668,15.5 H1676" stroke="#555" stroke-width="1.2"/><path d="M1668,17.5 H1676 L1672,21.5 Z" fill="#555"/>
    <g fill="#555"><path d="M1343,18 H1349 L1346,21 Z"/><path d="M1427,18 H1433 L1430,21 Z"/><path d="M1463,18 H1469 L1466,21 Z" fill="#aaa"/><path d="M1547,18 H1553 L1550,21 Z"/><path d="M1629,18 H1635 L1632,21 Z"/></g>
    </svg>
<div class="t" style="left:1733px;top:14px;font-size:12px;color:#222;">Autodesk Inventor Professional 2020</div>
<div class="t" style="left:1947px;top:14px;font-size:12.5px;color:#222;">2D도면화</div>
<svg class="a" style="left:2055px;top:14px;" width="6" height="10" viewBox="0 0 6 10"><path d="M1,1 L5,5 L1,9 Z" fill="#444"/></svg>
<div class="a" style="left:2066px;top:9px;width:180px;height:19px;background:#fff;"></div>
<div class="t" style="left:2071px;top:12px;font-size:12px;color:#333;">도움말 및 명령 검색...</div>
<svg class="a" style="left:0px;top:0px;" width="2560" height="40" viewBox="0 0 2560 40">
    <circle cx="2258" cy="14" r="4.5" fill="#4a8fe0" stroke="#2d5ea8"/><path d="M2250,27 Q2250,20 2258,20 Q2266,20 2266,27 Z" fill="#4a8fe0" stroke="#2d5ea8"/>
    <path d="M2356,18 H2362 L2359,21 Z" fill="#666"/>
    <path d="M2372,12 H2375 L2378,22 H2386 L2389,15 H2376" stroke="#2d5ea8" stroke-width="1.5" fill="none"/><circle cx="2379" cy="25" r="1.6" fill="#2d5ea8"/><circle cx="2386" cy="25" r="1.6" fill="#2d5ea8"/>
    <rect x="2397" y="10" width="1" height="18" fill="#bbb"/>
    <circle cx="2414" cy="19" r="7.5" fill="#fff" stroke="#1f4e9e" stroke-width="1.5"/><text x="2410" y="24" font-size="12" font-weight="bold" fill="#1f4e9e" font-family="Liberation Sans">?</text>
    <path d="M2429,18 H2435 L2432,21 Z" fill="#666"/>
    <rect x="2485" y="23" width="10" height="2" fill="#222"/>
    <rect x="2512.5" y="14.5" width="9" height="7" fill="none" stroke="#222" stroke-width="1.4"/><rect x="2509" y="18" width="9" height="7" fill="#d9d9d9" stroke="#222" stroke-width="1.4"/>
    <path d="M2535,14 L2546,25 M2546,14 L2535,25" stroke="#222" stroke-width="1.8"/>
    </svg>
<div class="t" style="left:2271px;top:12px;font-size:12px;color:#333;">leesh82974A...</div>
<div class="a" style="left:1288px;top:34px;width:44px;height:20px;background:#f6a01c;"></div>
<div class="t" style="left:1300px;top:38px;font-size:12px;color:#fff;">파일</div>
<div class="a" style="left:1335px;top:34px;width:58px;height:20px;background:#f5f5f5;"></div>
<div class="t" style="left:1345px;top:38px;font-size:12px;color:#222;">뷰 배치</div>
<div class="t" style="left:1404px;top:38px;font-size:12px;color:#555;">주석</div>
<div class="t" style="left:1448px;top:38px;font-size:12px;color:#555;">스케치</div>
<div class="t" style="left:1503px;top:38px;font-size:12px;color:#555;">도구</div>
<div class="t" style="left:1547px;top:38px;font-size:12px;color:#555;">관리</div>
<div class="t" style="left:1592px;top:38px;font-size:12px;color:#555;">뷰</div>
<div class="t" style="left:1623px;top:38px;font-size:12px;color:#555;">환경</div>
<div class="t" style="left:1668px;top:38px;font-size:12px;color:#555;">시작하기</div>
<div class="t" style="left:1736px;top:38px;font-size:12px;color:#555;">공동 작업</div>
<svg class="a" style="left:1818px;top:38px;" width="30" height="12" viewBox="0 0 30 12"><rect x="1" y="1.5" width="14" height="9" rx="4" fill="none" stroke="#333" stroke-width="1.2"/><path d="M4.5,8 L8,4 L11.5,8 Z" fill="#333"/><path d="M18,5 H24 L21,8 Z" fill="#333"/></svg>
<svg class="a" style="left:0px;top:0px;" width="2560" height="160" viewBox="0 0 2560 160">
    <rect x="1293.5" y="60.5" width="31" height="31" fill="none" stroke="#444" stroke-dasharray="2 2"/>
    <rect x="1296" y="70" width="19" height="19" fill="#6ab0e3"/><path d="M1297,64.5 H1314 M1297,62.5 V66.5 M1314,62.5 V66.5 M1318.5,70 V88 M1316.5,70 H1320.5 M1316.5,88 H1320.5" stroke="#555" stroke-width="1"/>
    <rect x="1331" y="60" width="31" height="11" fill="#6ab0e3"/><path d="M1346.5,60 V71" stroke="#4a8cc0"/><path d="M1331.5,71 V91.5 H1361.5 V71 M1331.5,80 H1346.5 V84 H1361.5 M1346.5,71 V80" stroke="#555" fill="none" stroke-width="1.1"/>
    <path d="M1382,67 L1389,60 L1400,71 L1393,78 Z" fill="#6ab0e3"/><path d="M1370.5,90.5 V77.5 H1383.5 V90.5 Z M1370.5,77.5 L1381,67 M1383.5,90.5 L1393,81" stroke="#555" fill="none" stroke-width="1.1"/>
    <rect x="1406.5" y="69.5" width="22" height="18" fill="none" stroke="#555" stroke-width="1.1"/><rect x="1429" y="68" width="8" height="21" fill="#6ab0e3"/><path d="M1427.5,62 V91 M1427.5,62 H1433 M1427.5,91 H1433" stroke="#555" fill="none"/><path d="M1432,59 L1436,62 L1432,65 Z M1432,88 L1436,91 L1432,94 Z" fill="#555"/>
    <path d="M1461,61.7 A15,15 0 1 1 1447,72" fill="none" stroke="#555" stroke-width="1.3"/><path d="M1462,59 L1458,61.7 L1462,64.5 Z M1444.5,73 L1447,69 L1449.5,73 Z" fill="#555"/>
    <rect x="1454.5" y="75.5" width="6" height="15.5" fill="#f5f5f5" stroke="#555"/><rect x="1461" y="79" width="8" height="12" fill="#6ab0e3"/><rect x="1469.5" y="71.5" width="5.5" height="19.5" fill="#f5f5f5" stroke="#555"/>
    <text x="1445" y="70" font-size="10" font-weight="bold" fill="#555" font-family="Liberation Sans">A</text>
    <rect x="1491.3" y="60.2" width="31.5" height="9.3" rx="1.5" fill="#6ab0e3"/><rect x="1495" y="64" width="1.6" height="1.6" fill="#555"/>
    <path d="M1494,69.5 H1508.5 L1518,81 Q1519,83 1517,85 L1513,88.5 Q1511,89.5 1509.5,88 L1500.5,78.5 V89.5 Q1500.5,91.5 1498.5,91.5 H1493.3 Q1491.5,91.5 1491.5,89.5 V69.5" fill="#f5f5f5" stroke="#555" stroke-width="1.1"/>
    <rect x="1539.5" y="61.5" width="14" height="14" fill="none" stroke="#444" stroke-dasharray="2 1.5"/><path d="M1541,64 L1548,71" stroke="#666" stroke-width="2.2"/><path d="M1547,70 L1549,73" stroke="#e03030" stroke-width="1"/><circle cx="1549" cy="74" r="1.8" fill="#2f8de0"/><path d="M1549,74 H1555 M1548,68 H1554" stroke="#2f8de0" stroke-width="1"/>
    <rect x="1539.5" y="85.5" width="15" height="14" fill="none" stroke="#c8c8c8" stroke-dasharray="2 1.5"/><path d="M1541,89 L1549,96" stroke="#c0c0c0" stroke-width="3"/><circle cx="1551" cy="97" r="2.2" fill="none" stroke="#c0c0c0"/>
    <g fill="none" stroke="#555" stroke-width="1.2"><rect x="1627.5" y="61.5" width="24" height="24"/><path d="M1633.5,61.5 V85.5 M1639.6,61.5 V85.5 M1645.7,61.5 V85.5 M1627.5,67.3 H1651.5 M1627.5,73.4 H1651.5 M1627.5,79.5 H1651.5"/></g>
    <path d="M1645,87.5 L1653.5,77 L1657,80 L1648.5,90.5 Z" fill="#f2c447" stroke="#888" stroke-width="0.6"/><path d="M1645,87.5 L1643.5,91.5 L1648.5,90.5 Z" fill="#555"/><circle cx="1655.5" cy="77.5" r="2.5" fill="#e03030"/><rect x="1638.5" y="88.5" width="2.5" height="2.5" fill="#2f8de0"/><path d="M1642,89 H1658" stroke="#555"/>
    <path d="M1683,65 H1671.5 V85.5 H1683 M1690,65 H1700.5 V85.5 H1690" stroke="#555" fill="none" stroke-width="1.1"/><path d="M1683.5,61 V71 L1680,75 L1683.5,79 V89 M1690.5,61 V71 L1687,75 L1690.5,79 V89" stroke="#2f8de0" fill="none" stroke-width="1.2"/>
    <rect x="1730.5" y="60.5" width="31" height="31" fill="none" stroke="#555" stroke-width="1.1"/><path d="M1731,69 Q1735,62 1740,65 Q1745,66 1750,65 Q1757,66 1758,73 Q1760,81 1752,84 Q1745,86 1740,84 Q1735,82 1731,83 Z" fill="#b5b5b5" stroke="#2f8de0" stroke-width="1"/><rect x="1731" y="70.5" width="20" height="10.5" fill="#f5f5f5" stroke="#555" stroke-width="1.1"/>
    <path d="M1799,65.2 L1829,79.5 V86 H1799 Z" fill="none" stroke="#555" stroke-width="1.1"/><path d="M1807.5,61 V91 M1821.5,61 V91" stroke="#f5f5f5" stroke-width="5"/><path d="M1807.5,61 V91 M1821.5,61 V91" stroke="#2f8de0" stroke-width="1.3"/>
    <path d="M1855.5,90 V68.7 H1876" fill="none" stroke="#555" stroke-width="2.6"/><path d="M1868.5,61 V82.5 H1858 M1847,82.5 H1851" fill="none" stroke="#2f8de0" stroke-width="2.4"/>
    <rect x="1899.5" y="68.5" width="13" height="14" fill="none" stroke="#555" stroke-width="1.1"/><rect x="1917.5" y="68.5" width="13" height="14" fill="#d8d8d8" stroke="#555" stroke-width="1.1"/><path d="M1907,75.5 H1922" stroke="#555" stroke-dasharray="2 1"/>
    <path d="M1947.5,62 H1976 M1947.5,62 V91 H1962" fill="none" stroke="#555" stroke-dasharray="2 1.5"/><g fill="#2f8de0"><rect x="1946" y="60" width="3" height="3"/><rect x="1974" y="60" width="3" height="3"/><rect x="1946" y="88" width="3" height="3"/><rect x="1952" y="66" width="2.5" height="2.5"/><rect x="1966" y="66" width="2.5" height="2.5"/><rect x="1952" y="79" width="2.5" height="2.5"/></g><path d="M1953,80 Q1955,68 1967,67" fill="none" stroke="#555"/><path d="M1960,89 L1972,77 L1976,81 L1964,93 Z" fill="#f2c447"/><circle cx="1975" cy="78" r="2.5" fill="#e03030"/>
    <rect x="1995.5" y="64.5" width="31" height="23" fill="none" stroke="#555" stroke-width="1.1"/><path d="M2008,80.5 H2026 M2008,80.5 V87 M2016,80.5 V87 M2008,84 H2026" stroke="#555" fill="none"/>
    <g fill="#ccc"><rect x="1618" y="57" width="1" height="72"/><rect x="1664" y="57" width="1" height="91"/><rect x="1887" y="57" width="1" height="72"/><rect x="1938" y="57" width="1" height="91"/><rect x="1985" y="57" width="1" height="91"/></g>
    <path d="M1912,112 H1918 L1915,115 Z" fill="#444"/>
    </svg>
<div class="t" style="left:1297px;top:95px;font-size:12px;color:#222;">기준</div>
<div class="t" style="left:1335px;top:95px;font-size:12px;color:#222;">투영</div>
<div class="t" style="left:1373px;top:95px;font-size:12px;color:#222;">보조</div>
<div class="t" style="left:1411px;top:95px;font-size:12px;color:#222;">단면</div>
<div class="t" style="left:1449px;top:95px;font-size:12px;color:#222;">상세</div>
<div class="t" style="left:1484px;top:95px;font-size:12px;color:#222;">오버레이</div>
<div class="t" style="left:1631px;top:95px;font-size:12px;color:#222;">제도</div>
<div class="t" style="left:1674px;top:95px;font-size:12px;color:#222;">끊기</div>
<div class="t" style="left:1708px;top:95px;font-size:12px;color:#222;">브레이크 아웃</div>
<div class="t" style="left:1790px;top:95px;font-size:12px;color:#222;">슬라이스</div>
<div class="t" style="left:1845px;top:95px;font-size:12px;color:#222;">오리기</div>
<div class="t" style="left:1903px;top:95px;font-size:12px;color:#222;">수평</div>
<div class="t" style="left:1944px;top:95px;font-size:12px;color:#222;">스케치</div>
<div class="t" style="left:1991px;top:95px;font-size:12px;color:#222;">새 시트</div>
<div class="t" style="left:1952px;top:109px;font-size:12px;color:#222;">시작</div>
<div class="t" style="left:1560px;top:61px;font-size:12px;color:#222;">네일보드</div>
<div class="t" style="left:1560px;top:85px;font-size:12px;color:#aaa;">커넥터</div>
<div class="t" style="left:1462px;top:131px;font-size:12px;color:#333;">작성</div>
<div class="t" style="left:1789px;top:131px;font-size:12px;color:#333;">수정</div>
<div class="t" style="left:1944px;top:131px;font-size:12px;color:#333;">스케치</div>
<div class="t" style="left:1999px;top:131px;font-size:12px;color:#333;">시트</div>
<div class="a" style="left:1288px;top:148px;width:140px;height:1236px;background:#f5f5f5;"></div>
<div class="a" style="left:1340px;top:148px;width:88px;height:23px;background:#d9d9d9;"></div>
<div class="t" style="left:1292px;top:154px;font-size:12px;color:#222;">모...</div>
<svg class="a" style="left:0px;top:0px;" width="2560" height="400" viewBox="0 0 2560 400">
    <path d="M1324,155 L1332,163 M1332,155 L1324,163" stroke="#444" stroke-width="1.3"/>
    <path d="M1350,154 V165 M1344.5,159.5 H1355.5" stroke="#555" stroke-width="1.6"/>
    <circle cx="1393" cy="159" r="4.5" fill="none" stroke="#555" stroke-width="1.4"/><path d="M1396,162 L1400,166" stroke="#555" stroke-width="1.6"/>
    <path d="M1409,154.5 H1423 M1409,159.5 H1423 M1409,164.5 H1423" stroke="#555" stroke-width="1.5"/>
    <rect x="1292.5" y="175.5" width="15" height="15" fill="#fff" stroke="#555"/><g fill="#4a9ad8"><rect x="1294" y="177" width="4" height="3"/><rect x="1294" y="183" width="4" height="3"/><rect x="1302" y="183" width="4" height="3"/></g>
    <path d="M1294,202.5 H1302 M1298,198.5 V206.5" stroke="#666" stroke-width="1.4"/><path d="M1307,197 H1313 L1315,199 H1323 V210 H1307 Z" fill="#f5d36b" stroke="#d8b04a" stroke-width="0.8"/>
    <path d="M1294,223 H1302" stroke="#222" stroke-width="1.6"/><rect x="1307.5" y="217.5" width="15" height="11" fill="#fff" stroke="#555"/><path d="M1314,224.5 H1322.5 M1314,224.5 V228.5" stroke="#555"/>
    <path d="M1297.5,192 V215 M1313.5,232 V300" stroke="#999" stroke-dasharray="1 2"/>
    <path d="M1309,243 H1317 M1313,239 V247" stroke="#666" stroke-width="1.4"/><rect x="1324.5" y="236.5" width="13" height="13" fill="none" stroke="#555" stroke-dasharray="1.5 1"/><rect x="1326" y="241" width="6" height="7" fill="#4a9ad8"/><path d="M1309,263 H1317 M1313,259 V267" stroke="#666" stroke-width="1.4"/><rect x="1324.5" y="256.5" width="13" height="13" fill="none" stroke="#555" stroke-dasharray="1.5 1"/><rect x="1326" y="261" width="6" height="7" fill="#4a9ad8"/><path d="M1309,283 H1317 M1313,279 V287" stroke="#666" stroke-width="1.4"/><rect x="1324.5" y="276.5" width="13" height="13" fill="none" stroke="#555" stroke-dasharray="1.5 1"/><rect x="1326" y="281" width="6" height="7" fill="#4a9ad8"/><path d="M1309,303 H1317 M1313,299 V307" stroke="#666" stroke-width="1.4"/><rect x="1324.5" y="296.5" width="13" height="13" fill="none" stroke="#555" stroke-dasharray="1.5 1"/><rect x="1326" y="301" width="6" height="7" fill="#4a9ad8"/></svg>
<div class="t" style="left:1310px;top:177px;font-size:12px;color:#111;">2D도면화</div>
<div class="t" style="left:1327px;top:197px;font-size:12px;color:#111;">도면 자원</div>
<div class="t" style="left:1327px;top:217px;font-size:12px;color:#111;">시트:1</div>
<div class="t" style="left:1342px;top:237px;font-size:12px;color:#111;width:86px;overflow:hidden">뷰2:몸체.ipt</div>
<div class="t" style="left:1342px;top:257px;font-size:12px;color:#111;width:86px;overflow:hidden">뷰4:축.ipt</div>
<div class="t" style="left:1342px;top:277px;font-size:12px;color:#111;width:86px;overflow:hidden">뷰5:스퍼기어.ipt</div>
<div class="t" style="left:1342px;top:297px;font-size:12px;color:#111;width:86px;overflow:hidden">뷰6:풀리.ipt</div>
<div class="a" style="left:1288px;top:1342px;width:140px;height:17px;background:#f0f0f0;"></div>
<div class="a" style="left:1306px;top:1343px;width:102px;height:15px;background:#c8c8c8;"></div>
<svg class="a" style="left:1292px;top:1345px;" width="130" height="12" viewBox="0 0 130 12"><path d="M5,2 L1,6 L5,10" stroke="#888" fill="none" stroke-width="1.2"/><path d="M125,2 L129,6 L125,10" stroke="#888" fill="none" stroke-width="1.2"/></svg>
<div class="a" style="left:1428px;top:148px;width:4px;height:1212px;background:#c4c4c4;"></div>
<div class="a" style="left:1432px;top:148px;width:125px;height:1188px;background:linear-gradient(#65718a 0%,#929cad 40%,#97a1b1 67%,#b8bcc5 80%,#c9cace 100%);"></div>
<div class="a" style="left:1556px;top:148px;width:1px;height:1188px;background:#1c1c3a;"></div>
<div class="a" style="left:1557px;top:148px;width:995px;height:1188px;background:#ecebd6;"></div>
<svg class="a" style="left:2510px;top:150px;" width="45" height="20" viewBox="0 0 45 20"><rect x="8.5" y="4.5" width="12" height="10" fill="none" stroke="#333" stroke-width="1.2"/><path d="M14.5,4.5 V14.5 M14.5,9.5 H20.5" stroke="#333"/><path d="M29,4 L39,14 M39,4 L29,14" stroke="#333" stroke-width="1.4"/></svg>
<svg class="a" style="left:0px;top:0px;" width="2560" height="400" viewBox="0 0 2560 400">
    <rect x="2517.5" y="173.5" width="33" height="200" rx="6" fill="#e4e4d6" stroke="#a8aaa0" stroke-width="1.5"/>
    <g fill="none" stroke="#999" stroke-width="1.4">
    <circle cx="2543" cy="180" r="2.8"/><path d="M2525,206 Q2523,197 2533,196 Q2541,196 2541,200 V210 Q2535,214 2527,212 Z"/><circle cx="2532" cy="205" r="4.5"/>
    <path d="M2521,224 H2546" stroke="#ccc"/>
    <path d="M2524,244 Q2526,249 2532,253 Q2542,254 2545,244 L2546,234 Q2545,232 2543,234 L2541,241 L2541,231 Q2539,229 2537,231 V240 V229 Q2535,227 2533,229 V240 V231 Q2531,229 2529,231 V245 L2525,241 Q2522,241 2524,244"/>
    <path d="M2522,270 H2530 M2526,266 V274 M2522,277 H2530"/><circle cx="2538" cy="279" r="5"/><path d="M2542,283 L2546,287"/>
    <path d="M2523,295 H2531 L2535,299 V313 H2523 Z"/><circle cx="2537" cy="310" r="5"/><path d="M2541,314 L2545,318"/>
    <rect x="2522" y="327" width="16" height="16"/><circle cx="2538" cy="341" r="5"/><path d="M2542,345 L2546,349"/>
    <circle cx="2543" cy="365" r="2.8"/>
    </g>
    <text x="2533" y="214" font-size="7" font-weight="bold" fill="#5a8ec8" font-family="Liberation Sans">2D</text>
    </svg>
<svg id="inv" class="a" style="left:0;top:0" width="2560" height="1440" viewBox="0 0 2560 1440">
<defs><pattern id="hatch" patternUnits="userSpaceOnUse" width="13" height="13" patternTransform="rotate(0)"><path d="M-1,14 L14,-1 M-7,7 L7,-7 M6,20 L20,6" stroke="#000" stroke-width="1"/></pattern>
<clipPath id="clipI"><rect x="1557" y="148" width="995" height="1188"/></clipPath></defs><g clip-path="url(#clipI)">
<g transform="translate(1682.7,233.75) scale(1.0517) translate(-367.5,-194.5)">
<path fill="url(#hatch)" fill-rule="evenodd" transform="" d="M367.5,194.5 H571.5 V345.5 H539.1 V462.4 H584 Q586,470 589.6,474 V495.8 H349.4 V474 Q353,470 355,462.4 H399.9 V345.5 H367.5 Z M420.2,215.5 H518.8 Q526.8,215.5 526.8,223.5 V316.7 Q526.8,324.7 518.8,324.7 H420.2 Q412.2,324.7 412.2,316.7 V223.5 Q412.2,215.5 420.2,215.5 Z M367.5,220.4 H412.2 V318.6 H367.5 Z M571.5,220.4 H526.8 V318.6 H571.5 Z M367.5,205.7 H401.4 V216.7 H367.5 Z M367.5,322.9 H401.4 V333.9 H367.5 Z M571.5,205.7 H537.6 V216.7 H571.5 Z M571.5,322.9 H537.6 V333.9 H571.5 Z" style="fill:url(#hatch)"/>
<path fill="url(#hatch)" d="M870,470.8 Q866,483 870,496.2 H893 V462.3 H883.4 Q882,470.8 874,470.8 Z M918.5,462.3 H929.8 L934.1,470 V496.2 H918.5 Z"/>
<path fill="url(#hatch)" d="M473.3,1046.3 Q474,1064 492,1064 Q513,1063 514.6,1050 V1046.3 H512.5 V1054.4 H481.6 V1046.3 Z M796.2,1046.3 Q797,1062 820,1062 Q845,1060 845.6,1050 V1046.3 H838 V1054.4 H802.5 V1046.3 Z"/>
<path class="v" d="M399.9,345.5 H367.5 V194.5 H571.5 V345.5 H539.1"/>
<path class="v" d="M399.9,345.5 V462.4 M539.1,345.5 V462.4"/>
<path class="v" d="M355,462.4 H399.9 M584,462.4 H539.1"/>
<path class="v" d="M355,462.4 Q353,470 349.4,474 V495.8 H589.6 V474 Q586,470 584,462.4"/>
<path class="v" d="M349.4,486 Q350,471 362,470.9 H392 Q399.9,470 399.9,462.4"/>
<path class="v" d="M589.6,486 Q589,471 577,470.9 H547 Q539.1,470 539.1,462.4"/>
<path class="v" d="M367.5,218 L370.5,220.4 H412.2 M370.5,220.4 V318.6 M367.5,321 L370.5,318.6 H412.2"/>
<path class="v" d="M571.5,218 L568.5,220.4 H526.8 M568.5,220.4 V318.6 M571.5,321 L568.5,318.6 H526.8"/>
<path class="v" d="M420.2,215.5 H518.8 Q526.8,215.5 526.8,223.5 V316.7 Q526.8,324.7 518.8,324.7 H420.2 Q412.2,324.7 412.2,316.7 V223.5 Q412.2,215.5 420.2,215.5 Z"/>
<path class="v" d="M367.5,205.7 H392.5 V216.7 H367.5 M367.5,206.89999999999998 H392.5 M367.5,215.5 H392.5 M392.5,205.7 H398.8 L401.4,211.2 L398.8,216.7 H392.5 M398.8,205.7 V216.7"/>
<path class="v" d="M571.5,205.7 H546.5 V216.7 H571.5 M571.5,206.89999999999998 H546.5 M571.5,215.5 H546.5 M546.5,205.7 H540.2 L537.6,211.2 L540.2,216.7 H546.5 M540.2,205.7 V216.7"/>
<path class="c2" d="M360,211.2 H406 M533,211.2 H579"/>
<path class="v" d="M367.5,322.9 H392.5 V333.9 H367.5 M367.5,324.09999999999997 H392.5 M367.5,332.7 H392.5 M392.5,322.9 H398.8 L401.4,328.4 L398.8,333.9 H392.5 M398.8,322.9 V333.9"/>
<path class="v" d="M571.5,322.9 H546.5 V333.9 H571.5 M571.5,324.09999999999997 H546.5 M571.5,332.7 H546.5 M546.5,322.9 H540.2 L537.6,328.4 L540.2,333.9 H546.5 M540.2,322.9 V333.9"/>
<path class="c2" d="M360,328.4 H406 M533,328.4 H579"/>
<path class="h" d="M370.5,264.1 H392.5 V275.1 H370.5 M392.5,264.1 H398.8 L401.4,269.6 L398.8,275.1 H392.5"/>
<path class="h" d="M568.5,264.1 H546.5 V275.1 H568.5 M546.5,264.1 H540.2 L537.6,269.6 L540.2,275.1 H546.5"/>
<path class="c2" d="M342,269.6 H606"/>
<path class="h" d="M456,470.9 Q461,469 461,463 V304 Q461,285 469.5,269.6 Q478,285 478,304 V463 Q478,469 483,470.9"/>
<path class="h" d="M399.9,344.4 H457 Q461,344.4 461,341 M539.1,344.4 H482 Q478,344.4 478,341"/>
<path class="h" d="M399.9,470.9 H456 M483,470.9 H539.1"/>
<path class="h" d="M364.9,462.4 V495.8"/>
<path class="h" d="M389.9,462.4 V495.8"/>
<path class="h" d="M549.1,462.4 V495.8"/>
<path class="h" d="M574.1,462.4 V495.8"/>
<path class="c2" d="M377.5,455.3 V502.9 M561.5,455.3 V502.9"/>
<circle class="v" cx="782.9" cy="269.8" r="75.8"/>
<circle class="v" cx="782.9" cy="269.8" r="51.4"/>
<circle class="v" cx="782.9" cy="269.8" r="48.3"/>
<circle class="v" cx="782.9" cy="211.10000000000002" r="5.5"/>
<circle class="v" cx="782.9" cy="328.5" r="5.5"/>
<circle class="v" cx="724.1999999999999" cy="269.8" r="5.5"/>
<circle class="v" cx="841.6" cy="269.8" r="5.5"/>
<path class="v" d="M707.1,269.8 V461 Q707.1,470.8 698,470.8 M858.7,269.8 V461 Q858.7,470.8 867.8,470.8"/>
<path class="v" d="M771.9,344.8 V462 Q771.9,470.8 764,470.8 M794.2,344.8 V462 Q794.2,470.8 802,470.8"/>
<path class="v" d="M632.2,496.2 V470 L636.5,462.3 H682.6 Q684,470.8 692,470.8 H874 Q882,470.8 883.4,462.3 H929.8 L934.1,470 V496.2 Z"/>
<path class="v" d="M893,462.3 V496.2 M918.5,462.3 V496.2 M870,470.8 Q866,483 870,496.2"/>
<path class="c2" d="M905.8,455 V503"/>
<path class="c" d="M782.9,159 V575"/>
<path class="v" d="M377.0,543.3 H562.5 Q590,543.3 590,570.8 V817.5 Q590,845 562.5,845 H377.0 Q349.5,845 349.5,817.5 V570.8 Q349.5,543.3 377.0,543.3 Z"/>
<circle class="v" cx="377.7" cy="571.2" r="22.3"/>
<circle class="v" cx="377.7" cy="571.2" r="13.2"/>
<circle class="v" cx="377.7" cy="816.4" r="22.3"/>
<circle class="v" cx="377.7" cy="816.4" r="13.2"/>
<circle class="v" cx="561.4" cy="571.2" r="22.3"/>
<circle class="v" cx="561.4" cy="571.2" r="13.2"/>
<circle class="v" cx="561.4" cy="816.4" r="22.3"/>
<circle class="v" cx="561.4" cy="816.4" r="13.2"/>
<path class="v" d="M367.1,618.2 H571.7 V769.5 H367.1 Z"/>
<path class="h" d="M461.3,639.5 H420 Q412,639.5 412,647.5 V740 Q412,748 420,748 H461.3 M478.3,639.5 H519 Q527,639.5 527,647.5 V740 Q527,748 519,748 H478.3"/>
<path class="h" d="M461.3,626.7 Q461.3,618.2 469.8,618.2 Q478.3,618.2 478.3,626.7 V674.4 Q478.3,682.4 486.3,682.4 H531 Q539,682.4 539,693.8 Q539,705.3 531,705.3 H486.3 Q478.3,705.3 478.3,713.3 V761 Q478.3,769.5 469.8,769.5 Q461.3,769.5 461.3,761 V713.3 Q461.3,705.3 453.3,705.3 H408 Q400,705.3 400,693.8 Q400,682.4 408,682.4 H453.3 Q461.3,682.4 461.3,674.4 Z"/>
<path class="h" d="M370,645.3 H412 M370,743 H412 M370,645.3 V743 M527,645.3 H569.5 M527,743 H569.5 M569.5,645.3 V743"/>
<path class="h" d="M367.1,630.4 H393 L400,635.4 L393,640.4 H367.1 M393,630.4 V640.4"/>
<path class="h" d="M571.7,630.4 H546 L539,635.4 L546,640.4 H571.7 M546,630.4 V640.4"/>
<path class="h" d="M367.1,688.8 H393 L400,693.8 L393,698.8 H367.1 M393,688.8 V698.8"/>
<path class="h" d="M571.7,688.8 H546 L539,693.8 L546,698.8 H571.7 M546,688.8 V698.8"/>
<path class="h" d="M367.1,747.3 H393 L400,752.3 L393,757.3 H367.1 M393,747.3 V757.3"/>
<path class="h" d="M571.7,747.3 H546 L539,752.3 L546,757.3 H571.7 M546,747.3 V757.3"/>
<path class="v" d="M439.3,1049 Q439.3,1046.3 442,1046.3 H456.8 L462.8,1050.9 H469.8 V1046.3 H520.6 L524.5,1042.3 H592.9 V1037.3 H721.8 V1042.3 H790.6 L794.5,1046.3 H850.3 V1050.9 H857.2 L863.8,1046.3 H878.4 Q881.1,1046.3 881.1,1049 V1078 Q881.1,1080.8 878.4,1080.8 H863.8 L857.2,1076.2 H850.3 V1080.8 H794.5 L790.6,1084.7 H721.8 V1090.3 H592.9 V1084.7 H524.5 L520.6,1080.8 H469.8 V1076.2 H462.8 L456.8,1080.8 H442 Q439.3,1080.8 439.3,1078 Z"/>
<path class="v" d="M456.8,1046.3 V1080.8 M469.8,1046.3 V1080.8 M520.6,1046.3 V1080.8 M592.9,1042.3 V1084.7 M721.8,1042.3 V1084.7 M794.5,1046.3 V1080.8 M850.3,1046.3 V1080.8 M863.8,1046.3 V1080.8"/>
<path class="v" d="M441.5,1046.3 V1080.8 M879,1046.3 V1080.8 M442,1048.3 H456.8 M442,1078.8 H456.8 M863.8,1048.3 H878.4 M863.8,1078.8 H878.4"/>
<path class="v" d="M473.3,1046.3 Q474,1064 492,1064 Q513,1063 514.6,1050 V1046.3 M481.6,1046.3 V1054.4 H512.5 V1046.3"/>
<path class="v" d="M796.2,1046.3 Q797,1062 820,1062 Q845,1060 845.6,1050 V1046.3 M802.5,1046.3 V1054.4 H838 V1046.3"/>
<path class="c3" d="M417,1063.4 H910"/>
</g>
<text x="1733" y="211" font-size="22" fill="#222" font-family="Liberation Sans">B-B ( 1 : 1 )</text>
<path d="M2119.7,177 V209 M2119.7,602 V635" stroke="#000" stroke-width="3"/><path d="M2121,194.5 H2142 M2121,619.6 H2142" stroke="#000" stroke-width="1.3"/><path d="M2121,194.5 L2128,192 V197 Z M2121,619.6 L2128,617 V622 Z" fill="#000"/>
<text x="2144" y="203" font-size="22" fill="#222" font-family="Liberation Sans">B</text><text x="2144" y="628" font-size="22" fill="#222" font-family="Liberation Sans">B</text>
</g></svg>
<div class="t" style="left:2114px;top:1281px;font-size:21px;color:#c5c4b5;">Windows 정품 인증</div>
<div class="t" style="left:2114px;top:1306px;font-size:15px;color:#c5c4b5;">[설정]으로 이동하여 Windows를 정품 인증합니다.</div>
<div class="a" style="left:1432px;top:1336px;width:1120px;height:24px;background:#d5d5d5;"></div>
<div class="a" style="left:1432px;top:1336px;width:109px;height:24px;background:#f0f0f0;"></div>
<div class="a" style="left:1432px;top:1357px;width:109px;height:3px;background:#2a9ad6;"></div>
<div class="t" style="left:1440px;top:1339px;font-size:12px;color:#2a8ad0;">2D도면화.idw</div>
<svg class="a" style="left:1519px;top:1339px;" width="12" height="12" viewBox="0 0 12 12"><path d="M2,2 L10,10 M10,2 L2,10" stroke="#333" stroke-width="1.6"/></svg>
<svg class="a" style="left:2530px;top:1341px;" width="16" height="14" viewBox="0 0 16 14"><path d="M1,2 H15 M1,7 H15 M1,12 H15" stroke="#555" stroke-width="1.8"/></svg>
<div class="a" style="left:1288px;top:1360px;width:1264px;height:24px;background:#eeeeee;"></div>
<div class="t" style="left:1289px;top:1366px;font-size:12px;color:#222;">준비</div>
<div class="a" style="left:2473px;top:1362px;width:1px;height:20px;background:#d0d0d0;"></div>
<div class="a" style="left:2513px;top:1362px;width:1px;height:20px;background:#d0d0d0;"></div>
<div class="a" style="left:2551px;top:1362px;width:1px;height:20px;background:#d0d0d0;"></div>
<div class="t" style="left:2483px;top:1366px;font-size:12px;color:#222;">4</div>
<div class="t" style="left:2521px;top:1366px;font-size:12px;color:#222;">5</div>
<div class="a" style="left:1280px;top:1384px;width:1280px;height:8px;background:#ecebd6;"></div>
<div class="a" style="left:1280px;top:1384px;width:54px;height:8px;background:#7a8598;"></div>
<div class="a" style="left:1334px;top:1384px;width:1px;height:8px;background:#1c1c3a;"></div>
<svg class="a" style="left:1280px;top:1384px;" width="1280" height="8" viewBox="0 0 1280 8"><g stroke="#111" stroke-width="2" fill="none"><path d="M1003.5,0 V8 M1004,7 L1016,0 M1021,8 L1028,0 M1033,6 L1040,0 M1040,0 V8 M1033,0 L1043,8 M1113,0 L1121,8 M1194.5,0 V8 M1269,8 L1280,0"/></g></svg>
<svg class="a" style="left:2552px;top:1258px;" width="8" height="20" viewBox="0 0 8 20"><path d="M0,0 L8,14" stroke="#111" stroke-width="2"/></svg>
<div class="a" style="left:0px;top:1392px;width:2560px;height:48px;background:linear-gradient(90deg,#e4ecf6 0%,#e0e8f4 30%,#d9e2f3 50%,#d3ddf4 62%,#dfe8f5 80%,#e3ebf5 100%);"></div>
<svg class="a" style="left:0px;top:0px;" width="2560" height="1440" viewBox="0 0 2560 1440">
    <path d="M21,1421 Q19,1413 27,1413 Q30,1406 37,1409 Q43,1409 43,1415 Q45,1421 40,1422 H24 Z" fill="#8ab8e8"/>
    <defs><linearGradient id="wg" x1="0" y1="0" x2="1" y2="1"><stop offset="0" stop-color="#3ccaf8"/><stop offset="1" stop-color="#0f6fd0"/></linearGradient><clipPath id="pill"><rect x="1018.5" y="1400.5" width="218" height="30" rx="15"/></clipPath></defs>
    <g fill="url(#wg)"><rect x="981" y="1405" width="11" height="11"/><rect x="993" y="1405" width="11" height="11"/><rect x="981" y="1417" width="11" height="11"/><rect x="993" y="1417" width="11" height="11"/></g>
    <rect x="1018.5" y="1400.5" width="218" height="30" rx="15" fill="#f3f6fb" stroke="#d0d6e0"/>
    <circle cx="1035" cy="1415" r="5.5" fill="none" stroke="#222" stroke-width="1.8"/><path d="M1039,1419 L1043,1423" stroke="#222" stroke-width="2"/>
    <g clip-path="url(#pill)"><path d="M1178,1432 Q1188,1420 1196,1414 L1203,1405 L1210,1411 Q1222,1414 1236,1424 V1432 Z" fill="#7a9438"/><path d="M1178,1432 Q1190,1424 1205,1424 Q1215,1426 1222,1432 Z" fill="#a7a27a"/><path d="M1184,1430 Q1196,1422 1210,1423 M1190,1432 Q1200,1427 1215,1428" stroke="#e8e4d0" stroke-width="1" fill="none"/><path d="M1205,1419 L1209,1415 L1213,1419 V1424 H1205 Z M1214,1420 L1217,1417 L1220,1420 V1424 H1214 Z" fill="#d8d2c0"/></g>
    <rect x="1249" y="1409" width="16" height="16" fill="#222"/><rect x="1256" y="1405" width="16" height="15" fill="#f5f5f5" stroke="#ccc"/><rect x="1252" y="1412" width="13" height="11" fill="#bbb"/>
    <circle cx="1305" cy="1415" r="11" fill="#6b5fd8"/><path d="M1295,1420 L1293,1427 L1300,1424 Z" fill="#6b5fd8"/><rect x="1298" y="1411" width="9" height="8" rx="1" fill="#fff"/><path d="M1307,1415 L1312,1411 V1419 Z" fill="#fff"/>
    <circle cx="1349" cy="1415" r="11" fill="#1ec7b0"/><path d="M1338,1413 Q1340,1403 1350,1404 Q1358,1405 1360,1412 Q1350,1410 1338,1413 Z" fill="#1e2a78"/><path d="M1345,1420 Q1352,1426 1360,1416 Q1359,1424 1350,1427 Z" fill="#f5f5f5"/>
    <path d="M1383,1407 H1390 L1392,1409 H1405 V1427 H1383 Z" fill="#f6c94a"/><rect x="1387" y="1420" width="13" height="6" rx="1" fill="#1f7fd6"/>
    <rect x="1428" y="1406" width="19" height="19" rx="2" fill="#d8322e"/><path d="M1435,1422 Q1437,1410 1441,1410 Q1443,1412 1437,1416 H1442" stroke="#fff" stroke-width="1.4" fill="none"/>
    <rect x="1462" y="1397" width="38" height="41" rx="4" fill="#eef2f9" stroke="#dde3ec"/>
    <rect x="1470" y="1404" width="23" height="23" fill="#f6dcd6"/><path d="M1473,1425 L1480,1406 H1484 L1491,1425 H1487 L1482,1412 L1477,1425 Z M1476,1419 H1488 L1487,1416 H1478 Z" fill="#c0201f"/>
    <rect x="1519" y="1404" width="23" height="23" fill="#f8e0c8"/><path d="M1525,1406 H1535 V1409 H1532 V1421 H1535 V1424 H1525 V1421 H1528 V1409 H1525 Z" fill="#e08a1e"/>
    <g fill="#777"><rect x="1346" y="1433" width="6" height="3" rx="1.5"/><rect x="1390" y="1433" width="6" height="3" rx="1.5"/><rect x="1434" y="1433" width="6" height="3" rx="1.5"/><rect x="1528" y="1433" width="6" height="3" rx="1.5"/></g>
    <rect x="1476" y="1433" width="10" height="3" rx="1.5" fill="#1f7fd6"/>
    <path d="M2292,1420 L2297,1415 L2302,1420" stroke="#222" stroke-width="1.5" fill="none"/>
    <path d="M2400,1406 H2412 V1420 H2400 Z M2404,1423 H2408 M2406,1420 V1423" stroke="#222" stroke-width="1.3" fill="none"/><rect x="2410" y="1404" width="5" height="8" fill="#eee" stroke="#222"/>
    <path d="M2422,1412 H2425 L2429,1408 V1424 L2425,1420 H2422 Z" stroke="#222" stroke-width="1.2" fill="none"/><path d="M2432,1411 Q2435,1416 2432,1421" stroke="#222" fill="none"/>
    <circle cx="2531" cy="1416" r="8" fill="#1167c8"/>
    </svg>
<div class="t" style="left:50px;top:1402px;font-size:12px;color:#222;">12°C</div>
<div class="t" style="left:50px;top:1417px;font-size:12px;color:#444;">흐림</div>
<div class="t" style="left:1055px;top:1408px;font-size:14px;color:#555;">검색</div>
<div class="t" style="left:2322px;top:1406px;font-size:18px;color:#222;">A</div>
<div class="t" style="left:2360px;top:1407px;font-size:15px;color:#222;">한</div>
<div class="t" style="left:2467px;top:1401px;font-size:12px;color:#222;">오전 1:30</div>
<div class="t" style="left:2454px;top:1417px;font-size:12px;color:#222;">2023-04-18</div>
<div class="t" style="left:2528px;top:1410px;font-size:10px;color:#fff;">1</div>
</div></body></html>
